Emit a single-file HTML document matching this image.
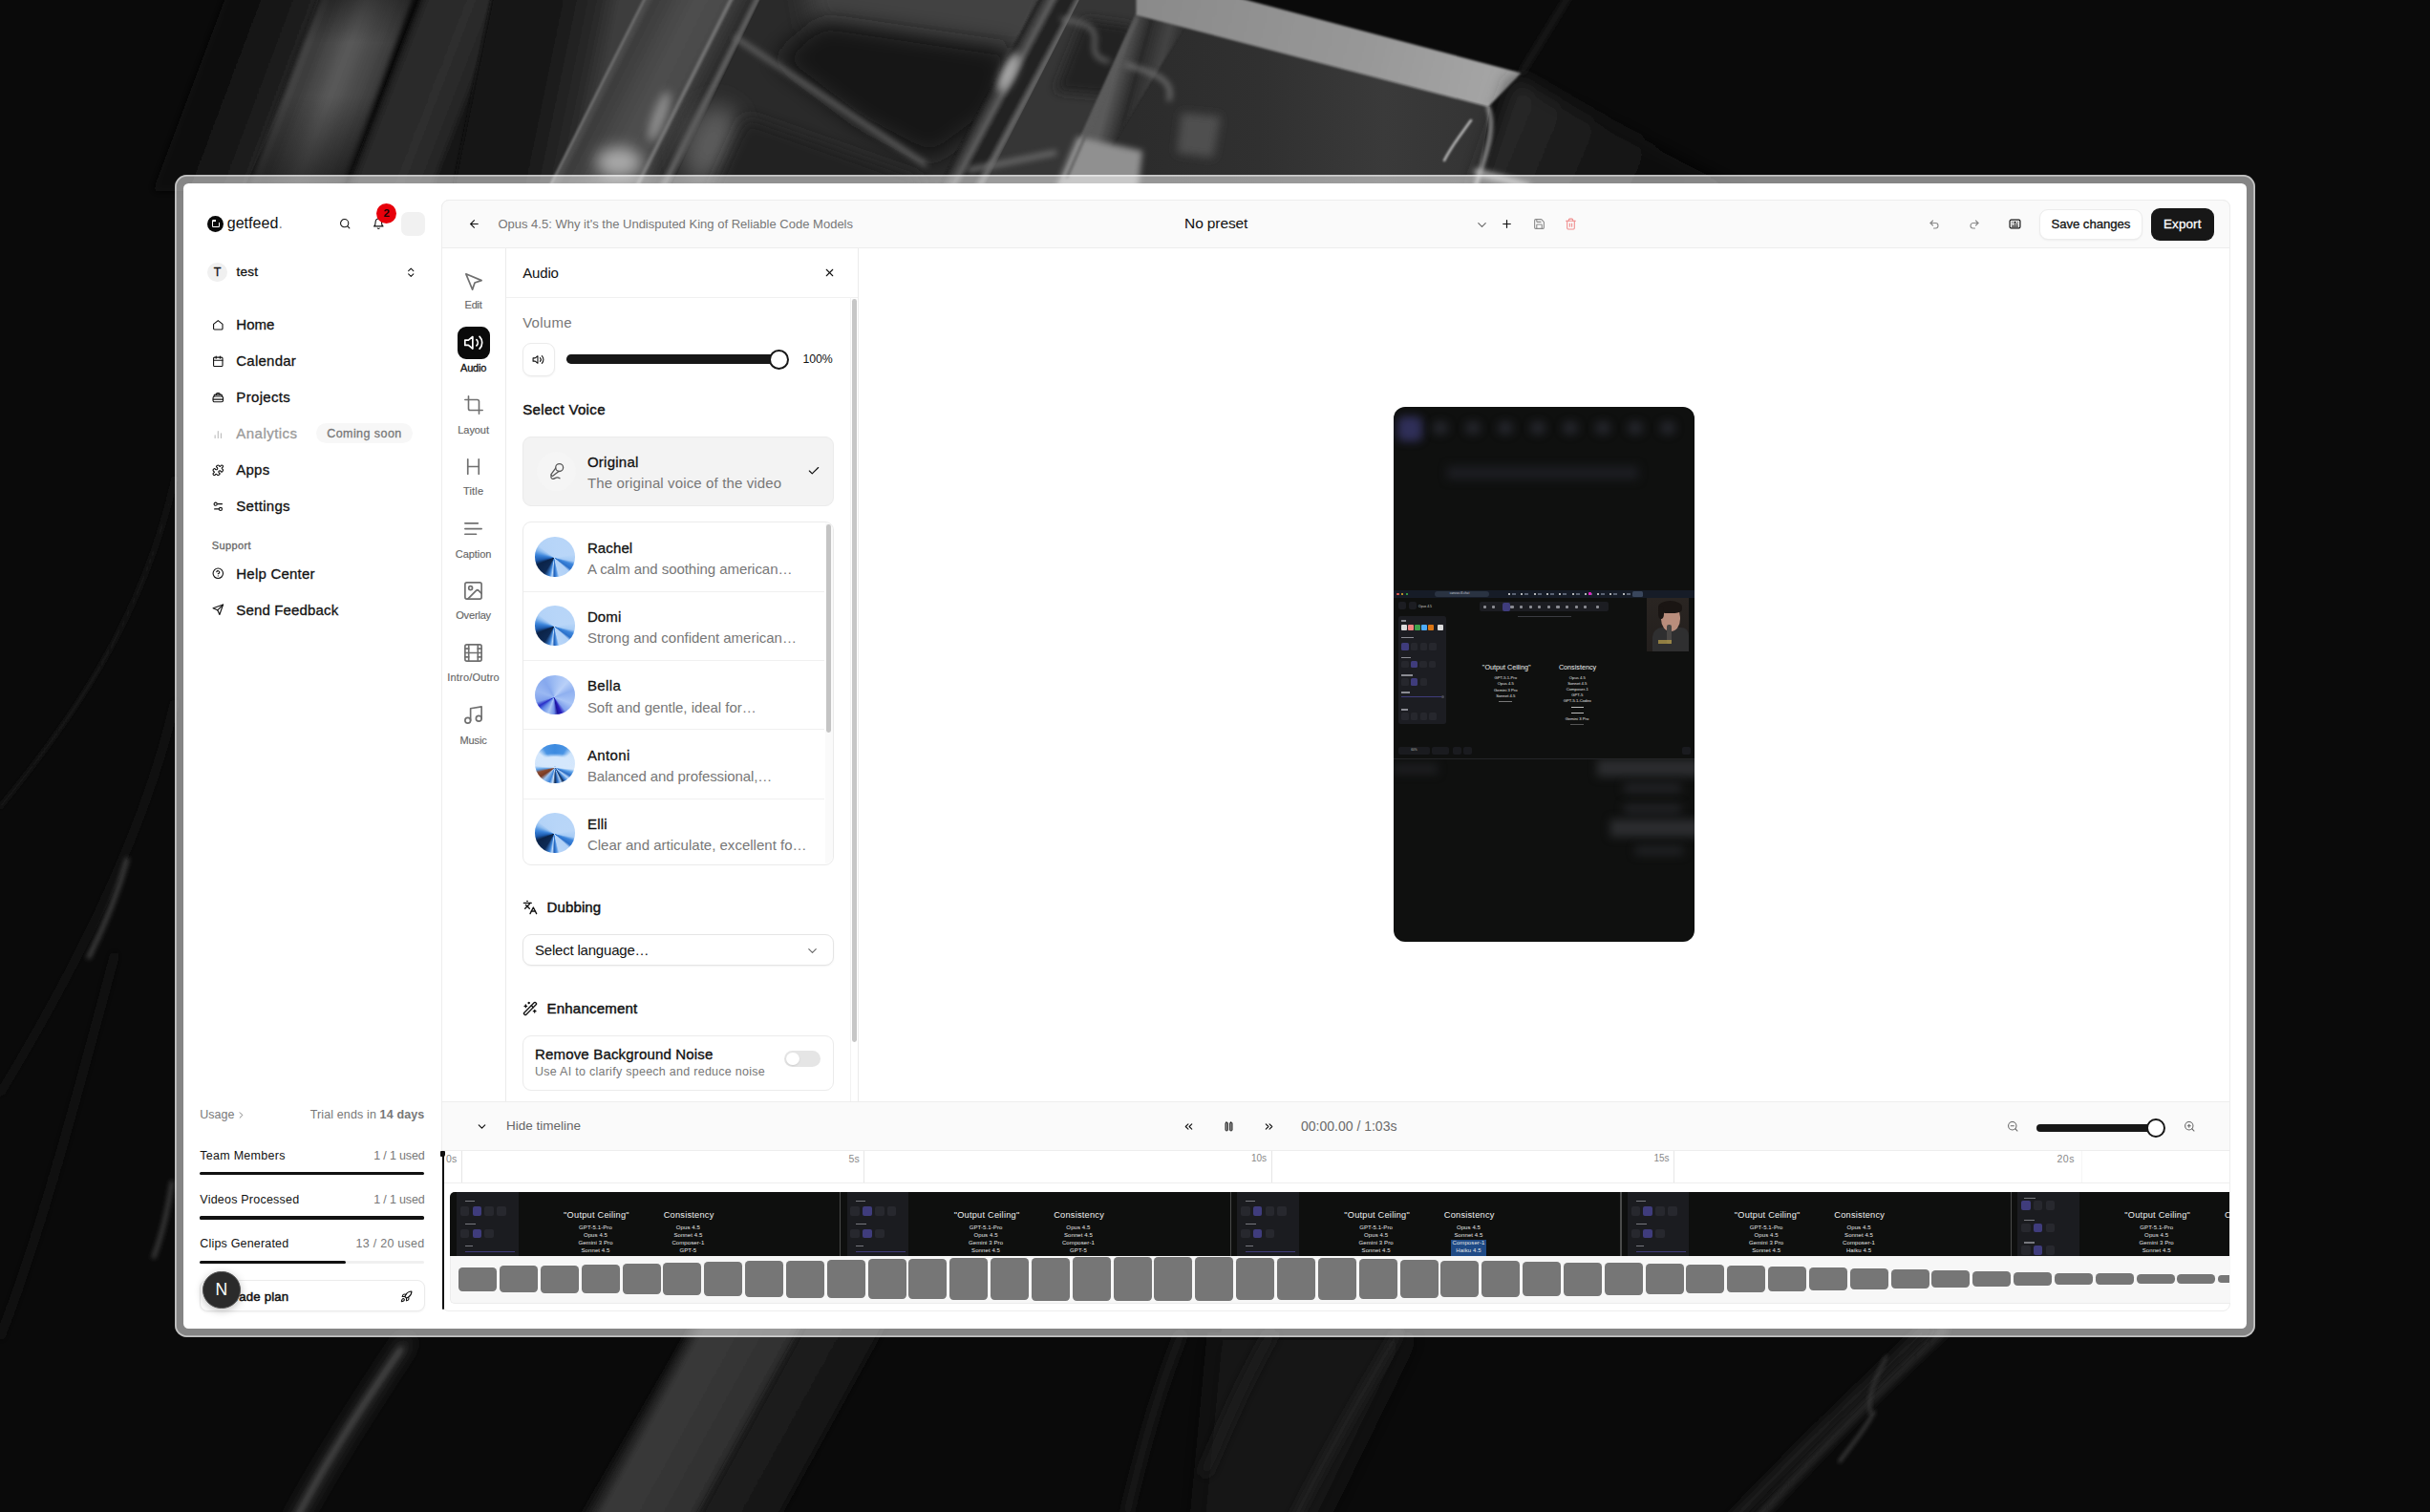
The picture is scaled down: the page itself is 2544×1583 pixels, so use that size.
<!DOCTYPE html>
<html lang="en"><head><meta charset="utf-8"><title>getfeed editor</title><style>
html,body{margin:0;padding:0;background:#0a0a0a;}
body{width:2544px;height:1583px;position:relative;overflow:hidden;background:#0a0a0a;font-family:"Liberation Sans", sans-serif;}
body>div,body>svg,body>span,.a{position:absolute;box-sizing:border-box;}
.t{white-space:nowrap;display:block;}
.t span{display:inline-block;}
svg{display:block;overflow:visible;}
</style></head>
<body>
<svg class="a" style="left:0;top:0" width="2544" height="1583" viewBox="0 0 2544 1583"><defs><linearGradient id="g1" gradientUnits="userSpaceOnUse" x1="235" y1="0" x2="324.0" y2="33.4"><stop offset="0" stop-color="#0a0a0a"/><stop offset="0.6" stop-color="#161616"/><stop offset="1" stop-color="#232323"/></linearGradient><linearGradient id="g2" gradientUnits="userSpaceOnUse" x1="334" y1="0" x2="421.4" y2="33.2"><stop offset="0" stop-color="#2e2e2e"/><stop offset="0.05" stop-color="#484848"/><stop offset="0.13" stop-color="#3a3a3a"/><stop offset="0.5" stop-color="#5a5a5a"/><stop offset="0.8" stop-color="#464646"/><stop offset="0.94" stop-color="#3c3c3c"/><stop offset="1" stop-color="#1e1e1e"/></linearGradient><linearGradient id="g3" gradientUnits="userSpaceOnUse" x1="0" y1="-10" x2="0" y2="45"><stop offset="0" stop-color="#0b0b0b" stop-opacity="0.5"/><stop offset="1" stop-color="#0b0b0b" stop-opacity="0"/></linearGradient><linearGradient id="g4" gradientUnits="userSpaceOnUse" x1="0" y1="100" x2="0" y2="200"><stop offset="0" stop-color="#0b0b0b" stop-opacity="0"/><stop offset="1" stop-color="#0b0b0b" stop-opacity="0.6"/></linearGradient><linearGradient id="g5" gradientUnits="userSpaceOnUse" x1="440" y1="0" x2="521.2" y2="31.7"><stop offset="0" stop-color="#1a1a1a"/><stop offset="0.1" stop-color="#2a2a2a"/><stop offset="0.6" stop-color="#2d2d2d"/><stop offset="0.9" stop-color="#262626"/><stop offset="1" stop-color="#151515"/></linearGradient><linearGradient id="g6" gradientUnits="userSpaceOnUse" x1="515" y1="0" x2="643.1" y2="26.3"><stop offset="0" stop-color="#151515"/><stop offset="0.5" stop-color="#161616"/><stop offset="0.85" stop-color="#2a2a2a"/><stop offset="1" stop-color="#3c3c3c"/></linearGradient><linearGradient id="g7" gradientUnits="userSpaceOnUse" x1="673" y1="0" x2="773.0" y2="50.5"><stop offset="0" stop-color="#8a8a8a"/><stop offset="0.025" stop-color="#505050"/><stop offset="0.1" stop-color="#3c3c3c"/><stop offset="0.45" stop-color="#4e4e4e"/><stop offset="0.71" stop-color="#4a4a4a"/><stop offset="0.735" stop-color="#808080"/><stop offset="0.76" stop-color="#3c3c3c"/><stop offset="0.9" stop-color="#2c2c2c"/><stop offset="0.955" stop-color="#626262"/><stop offset="1" stop-color="#303030"/></linearGradient><linearGradient id="g8" gradientUnits="userSpaceOnUse" x1="1087" y1="0" x2="1125.9" y2="20.8"><stop offset="0" stop-color="#1c1c1c"/><stop offset="0.3" stop-color="#5c5c5c"/><stop offset="0.45" stop-color="#222"/><stop offset="0.7" stop-color="#222"/><stop offset="0.85" stop-color="#686868"/><stop offset="1" stop-color="#2e2e2e"/></linearGradient><linearGradient id="g9" gradientUnits="userSpaceOnUse" x1="1189" y1="0" x2="1560" y2="0"><stop offset="0" stop-color="#2c2c2c"/><stop offset="0.35" stop-color="#303030"/><stop offset="0.7" stop-color="#3a3a3a"/><stop offset="1" stop-color="#333"/></linearGradient><linearGradient id="g10" gradientUnits="userSpaceOnUse" x1="1189" y1="0" x2="1240" y2="14"><stop offset="0" stop-color="#5a5a5a"/><stop offset="0.4" stop-color="#2a2a2a"/><stop offset="0.8" stop-color="#444"/><stop offset="1" stop-color="#333"/></linearGradient><linearGradient id="g11" gradientUnits="userSpaceOnUse" x1="1189" y1="0" x2="1592" y2="100"><stop offset="0" stop-color="#8a8a8a"/><stop offset="0.6" stop-color="#989898"/><stop offset="1" stop-color="#a8a8a8"/></linearGradient><linearGradient id="g12" gradientUnits="userSpaceOnUse" x1="1570" y1="110" x2="1760" y2="190"><stop offset="0" stop-color="#2a2a2a"/><stop offset="0.4" stop-color="#1c1c1c"/><stop offset="1" stop-color="#0b0b0b"/></linearGradient><linearGradient id="g13" gradientUnits="userSpaceOnUse" x1="728" y1="1380" x2="833" y2="1438"><stop offset="0" stop-color="#161616"/><stop offset="0.12" stop-color="#3a3a3a"/><stop offset="0.5" stop-color="#353535"/><stop offset="0.85" stop-color="#2e2e2e"/><stop offset="1" stop-color="#161616"/></linearGradient><linearGradient id="g14" gradientUnits="userSpaceOnUse" x1="846" y1="1380" x2="920" y2="1421"><stop offset="0" stop-color="#1c1c1c"/><stop offset="0.7" stop-color="#181818"/><stop offset="1" stop-color="#0d0d0d"/></linearGradient><filter id="b1" filterUnits="userSpaceOnUse" x="-100" y="-100" width="2800" height="1800"><feGaussianBlur stdDeviation="1"/></filter><filter id="b1.5" filterUnits="userSpaceOnUse" x="-100" y="-100" width="2800" height="1800"><feGaussianBlur stdDeviation="1.5"/></filter><filter id="b2" filterUnits="userSpaceOnUse" x="-100" y="-100" width="2800" height="1800"><feGaussianBlur stdDeviation="2"/></filter><filter id="b2.5" filterUnits="userSpaceOnUse" x="-100" y="-100" width="2800" height="1800"><feGaussianBlur stdDeviation="2.5"/></filter><filter id="b3" filterUnits="userSpaceOnUse" x="-100" y="-100" width="2800" height="1800"><feGaussianBlur stdDeviation="3"/></filter><filter id="b4" filterUnits="userSpaceOnUse" x="-100" y="-100" width="2800" height="1800"><feGaussianBlur stdDeviation="4"/></filter><filter id="b5" filterUnits="userSpaceOnUse" x="-100" y="-100" width="2800" height="1800"><feGaussianBlur stdDeviation="5"/></filter><filter id="b6" filterUnits="userSpaceOnUse" x="-100" y="-100" width="2800" height="1800"><feGaussianBlur stdDeviation="6"/></filter><filter id="b8" filterUnits="userSpaceOnUse" x="-100" y="-100" width="2800" height="1800"><feGaussianBlur stdDeviation="8"/></filter><filter id="b10" filterUnits="userSpaceOnUse" x="-100" y="-100" width="2800" height="1800"><feGaussianBlur stdDeviation="10"/></filter><filter id="b12" filterUnits="userSpaceOnUse" x="-100" y="-100" width="2800" height="1800"><feGaussianBlur stdDeviation="12"/></filter></defs><polygon points="246.25,-30 347.1,-30 262,200 160,200" fill="url(#g1)" filter="url(#b4)"/><polygon points="345.4,-30 442.8,-30 360,200 258,200" fill="url(#g2)" filter="url(#b2)"/><polygon points="345,-30 445,-30 420,45 316,45" fill="url(#g3)"/><polygon points="300,100 402,100 362,200 254,200" fill="url(#g4)"/><polygon points="451.7,-30 521.15,-30 474,200 362,200" fill="url(#g5)" filter="url(#b2)"/><polygon points="521.15,-30 690.4,-30 580,200 474,200" fill="url(#g6)" filter="url(#b2)"/><polygon points="688.15,-30 810.4,-30 700,200 572,200" fill="url(#g7)" filter="url(#b1)"/><ellipse cx="648" cy="170" rx="24" ry="16" fill="#a8a8a8" filter="url(#b8)"/><ellipse cx="690" cy="122" rx="7" ry="28" fill="#8c8c8c" filter="url(#b5)" transform="rotate(20 690 122)"/><polygon points="810.4,-30 1131.8,-30 1003,200 700,200" fill="#2a2a2a"/><polygon points="840,-30 1115,-30 1080,62 850,30" fill="#424242" filter="url(#b12)"/><polygon points="812,62 860,22 1062,52 1040,120 975,168 900,128" fill="#171717" filter="url(#b12)"/><ellipse cx="744" cy="150" rx="26" ry="42" fill="#5c5c5c" filter="url(#b12)" transform="rotate(20 744 150)"/><line x1="771" y1="40" x2="968" y2="172" stroke="#666" stroke-width="5" stroke-linecap="round" filter="url(#b3)"/><polygon points="780,122 965,187 960,210 740,210" fill="#222" filter="url(#b8)"/><polygon points="1103.05,-30 1153.05,-30 1030,200 980,200" fill="url(#g8)" filter="url(#b1)"/><ellipse cx="1056" cy="76" rx="7" ry="22" fill="#aaa" filter="url(#b4)" transform="rotate(25 1056 76)"/><polygon points="1145,-30 1192,-30 1192,200 1028,200" fill="#363636"/><polygon points="1135,20 1190,28 1160,100 1105,95" fill="#242424" filter="url(#b6)"/><path d="M1112 20 C1140 24 1148 30 1146 44 C1144 58 1150 62 1160 64" fill="none" stroke="#6c6c6c" stroke-width="4" stroke-linecap="round" filter="url(#b3)"/><line x1="1015" y1="178" x2="1104" y2="160" stroke="#707070" stroke-width="5" stroke-linecap="round" filter="url(#b3)"/><polygon points="1189,14 1560,112 1546,200 1120,200" fill="url(#g9)"/><polygon points="1189,14 1240,28 1135,200 1105,200" fill="url(#g10)" filter="url(#b1)"/><polygon points="1237,118 1278,122 1270,165 1232,160" fill="#505050" filter="url(#b5)"/><path d="M1180 68 C1205 76 1230 82 1224 104" fill="none" stroke="#7a7a7a" stroke-width="4" stroke-linecap="round" filter="url(#b3)"/><polygon points="1100,210 1128,143 1196,158 1190,210" fill="#909090" filter="url(#b3)"/><line x1="1190" y1="20" x2="1117" y2="186" stroke="#5c5c5c" stroke-width="2.5" stroke-linecap="round" filter="url(#b1.5)"/><polygon points="1189.5,-30 1192,-30 1305,0 1592.5,76.4 1558,112 1189.5,15.8" fill="url(#g11)" filter="url(#b1)"/><polygon points="1189.5,-30 1305,0 1189.5,0" fill="#8a8a8a"/><polygon points="1585,80 1830,205 1540,205" fill="url(#g12)" filter="url(#b10)"/><path d="M1546 180 C1560 184 1580 188 1600 196" fill="none" stroke="#b8b8b8" stroke-width="6" stroke-linecap="round" filter="url(#b3)"/><path d="M1558 112 C1566 135 1556 160 1545 195" fill="none" stroke="#c4c4c4" stroke-width="3" stroke-linecap="round" filter="url(#b2)"/><path d="M1540 126 C1530 140 1520 152 1512 168" fill="none" stroke="#bdbdbd" stroke-width="2.5" stroke-linecap="round" filter="url(#b1)"/><line x1="1652" y1="-20" x2="1593" y2="76" stroke="#2a2a2a" stroke-width="3" stroke-linecap="round" filter="url(#b3)"/><path d="M183 500 C150 650 70 760 0 845" fill="none" stroke="#1d1d1d" stroke-width="3" stroke-linecap="round" filter="url(#b2)"/><path d="M183 735 C150 880 70 1030 0 1145" fill="none" stroke="#1b1b1b" stroke-width="4" stroke-linecap="round" filter="url(#b3)"/><path d="M133 900 C122 940 108 972 93 1002" fill="none" stroke="#4a4a4a" stroke-width="4" stroke-linecap="round" filter="url(#b2.5)"/><path d="M180 1238 C176 1265 170 1292 161 1316" fill="none" stroke="#424242" stroke-width="4" stroke-linecap="round" filter="url(#b2.5)"/><path d="M120 1000 C80 1150 40 1300 0 1400" fill="none" stroke="#181818" stroke-width="5" stroke-linecap="round" filter="url(#b4)"/><polygon points="728,1380 846,1380 708,1630 584,1630" fill="url(#g13)" filter="url(#b3)"/><polygon points="846,1380 930,1380 792,1630 708,1630" fill="url(#g14)" filter="url(#b4)"/><path d="M424 1406 C385 1466 342 1530 300 1610" fill="none" stroke="#2a2a2a" stroke-width="14" stroke-linecap="round" filter="url(#b8)"/><path d="M420 1412 C380 1470 340 1530 305 1600" fill="none" stroke="#5a5a5a" stroke-width="4" stroke-linecap="round" filter="url(#b3)"/><path d="M2035 1392 C1965 1456 1900 1522 1830 1600" fill="none" stroke="#2e2e2e" stroke-width="8" stroke-linecap="round" filter="url(#b4)"/><path d="M2016 1392 C1950 1455 1880 1522 1806 1600" fill="none" stroke="#1e1e1e" stroke-width="12" stroke-linecap="round" filter="url(#b5)"/><path d="M1962 1478 C1952 1498 1937 1514 1926 1530" fill="none" stroke="#505050" stroke-width="2.5" stroke-linecap="round" filter="url(#b2)"/><path d="M1975 1420 C1960 1450 1955 1462 1958 1480" fill="none" stroke="#3c3c3c" stroke-width="2.5" stroke-linecap="round" filter="url(#b2)"/><polygon points="1272,1395 1480,1395 1365,1630 1250,1630" fill="#141414" filter="url(#b12)"/><path d="M1462 1398 C1420 1470 1390 1520 1345 1610" fill="none" stroke="#242424" stroke-width="8" stroke-linecap="round" filter="url(#b5)"/><path d="M1330 1398 C1300 1450 1280 1500 1262 1540" fill="none" stroke="#1c1c1c" stroke-width="10" stroke-linecap="round" filter="url(#b6)"/><path d="M1236 1398 C1215 1450 1200 1500 1180 1583" fill="none" stroke="#1a1a1a" stroke-width="8" stroke-linecap="round" filter="url(#b5)"/></svg>
<div style="left:183.2px;top:183px;width:2177.6px;height:1216.8px;border-radius:12.5px;background:rgba(255,255,255,0.5);box-shadow:inset 0 0 0 1.8px rgba(255,255,255,0.5);"></div>
<div style="left:191.8px;top:191.8px;width:2160.3px;height:1199px;border-radius:5.5px;background:#fff;"></div>
<div style="left:217px;top:225.8px;width:17px;height:17px;border-radius:50%;background:#0a0a0a;"></div>
<div style="left:221.6px;top:230.3px;width:8.4px;height:8px;background:#fff;border-radius:1.2px;"></div>
<div style="left:223px;top:231.6px;width:5.6px;height:5.4px;background:#0a0a0a;border-radius:0.6px;"></div>
<div style="left:226px;top:229.8px;width:4.4px;height:3.5px;background:#0a0a0a;"></div>
<span class="t" style="top:223.28px;font-size:16px;line-height:21px;color:#111;letter-spacing:0.06px;left:237.7px;">getfeed<span style="color:#8a8a8a">.</span></span>
<svg style="left:354.5px;top:228.2px;" width="12.4" height="12.4" viewBox="0 0 24 24" fill="none" stroke="#111" stroke-width="2.1" stroke-linecap="round" stroke-linejoin="round"><circle cx="11" cy="11" r="8"/><path d="m21 21-4.3-4.3"/></svg>
<svg style="left:390.2px;top:228.3px;" width="12.6" height="12.6" viewBox="0 0 24 24" fill="none" stroke="#111" stroke-width="2.1" stroke-linecap="round" stroke-linejoin="round"><path d="M6 8a6 6 0 0 1 12 0c0 7 3 9 3 9H3s3-2 3-9"/><path d="M10.3 21a1.94 1.94 0 0 0 3.4 0"/></svg>
<div style="left:393.95px;top:212.55px;width:21.5px;height:21.5px;border-radius:50%;background:#e7000b;"></div>
<span class="t" style="top:215.93px;font-size:11.5px;line-height:15px;color:#1a0306;font-weight:700;left:104.7px;width:600px;text-align:center;"><span>2</span></span>
<div style="left:420px;top:222px;width:25px;height:25px;background:#f1f1f1;border-radius:7px;"></div>
<div style="left:217.2px;top:274.5px;width:20.6px;height:20.6px;border-radius:50%;background:#f0f0f0;"></div>
<span class="t" style="top:276.94px;font-size:12.5px;line-height:16px;color:#111;-webkit-text-stroke:0.3px #111;left:-72.5px;width:600px;text-align:center;"><span>T</span></span>
<span class="t" style="top:275.76px;font-size:13.5px;line-height:18px;color:#111;-webkit-text-stroke:0.3px #111;letter-spacing:0.23px;left:247.6px;">test</span>
<svg style="left:424.05px;top:278.75px;" width="12.5" height="12.5" viewBox="0 0 24 24" fill="none" stroke="#111" stroke-width="2" stroke-linecap="round" stroke-linejoin="round"><path d="m7 15 5 5 5-5"/><path d="m7 9 5-5 5 5"/></svg>
<svg style="left:221.5px;top:333.7px;" width="12.6" height="12.6" viewBox="0 0 24 24" fill="none" stroke="#111" stroke-width="2.1" stroke-linecap="round" stroke-linejoin="round"><path d="M3 10.2 12 3l9 7.2V19a2 2 0 0 1-2 2H5a2 2 0 0 1-2-2z"/></svg>
<span class="t" style="top:329.97px;font-size:15px;line-height:20px;color:#111;-webkit-text-stroke:0.3px #111;left:247.3px;">Home</span>
<svg style="left:221.5px;top:371.7px;" width="12.6" height="12.6" viewBox="0 0 24 24" fill="none" stroke="#111" stroke-width="2.1" stroke-linecap="round" stroke-linejoin="round"><rect x="3" y="4" width="18" height="18" rx="2"/><path d="M16 2v4M8 2v4M3 10h18"/></svg>
<span class="t" style="top:367.97px;font-size:15px;line-height:20px;color:#111;-webkit-text-stroke:0.3px #111;letter-spacing:0.23px;left:247.3px;">Calendar</span>
<svg style="left:221.5px;top:409.7px;" width="12.6" height="12.6" viewBox="0 0 24 24" fill="none" stroke="#111" stroke-width="2.1" stroke-linecap="round" stroke-linejoin="round"><path d="M4 9.5V8a2 2 0 0 1 2-2h12a2 2 0 0 1 2 2v1.5"/><rect x="2" y="9.5" width="20" height="11" rx="3"/><path d="M8.5 6V5a2 2 0 0 1 2-2h3a2 2 0 0 1 2 2v1"/><path d="M2.5 15.5h19"/></svg>
<span class="t" style="top:405.97px;font-size:15px;line-height:20px;color:#111;-webkit-text-stroke:0.3px #111;letter-spacing:0.34px;left:247.3px;">Projects</span>
<svg style="left:221.5px;top:447.6px;" width="12.6" height="12.6" viewBox="0 0 24 24" fill="none" stroke="#bcbcbc" stroke-width="2.1" stroke-linecap="round" stroke-linejoin="round"><path d="M6 20v-5M12 20V7M18 20v-9"/></svg>
<span class="t" style="top:443.87px;font-size:15px;line-height:20px;color:#9a9a9a;-webkit-text-stroke:0.3px #9a9a9a;letter-spacing:0.47px;left:247.3px;">Analytics</span>
<div style="left:331px;top:443.3px;width:100.6px;height:21.2px;background:#f7f7f7;border-radius:10.6px;"></div>
<span class="t" style="top:445.84px;font-size:12.5px;line-height:16px;color:#777;-webkit-text-stroke:0.3px #777;letter-spacing:0.44px;left:342.2px;">Coming soon</span>
<svg style="left:221.5px;top:485.7px;" width="12.6" height="12.6" viewBox="0 0 24 24" fill="none" stroke="#111" stroke-width="2.1" stroke-linecap="round" stroke-linejoin="round"><path d="M19.439 7.85c-.049.322.059.648.289.878l1.568 1.568c.47.47.706 1.087.706 1.704s-.235 1.233-.706 1.704l-1.611 1.611a.98.98 0 0 1-.837.276c-.47-.07-.802-.48-.968-.925a2.501 2.501 0 1 0-3.214 3.214c.446.166.855.497.925.968a.979.979 0 0 1-.276.837l-1.61 1.61a2.404 2.404 0 0 1-1.705.707 2.402 2.402 0 0 1-1.704-.706l-1.568-1.568a1.026 1.026 0 0 0-.877-.29c-.493.074-.84.504-1.02.968a2.5 2.5 0 1 1-3.237-3.237c.464-.18.894-.527.967-1.02a1.026 1.026 0 0 0-.289-.877l-1.568-1.568A2.402 2.402 0 0 1 1.998 12c0-.617.236-1.234.706-1.704L4.23 8.77c.24-.24.581-.353.917-.303.515.077.877.528 1.073 1.01a2.5 2.5 0 1 0 3.259-3.259c-.482-.196-.933-.558-1.01-1.073-.05-.336.062-.676.303-.917l1.525-1.525A2.402 2.402 0 0 1 12 1.998c.617 0 1.234.236 1.704.706l1.568 1.568c.23.23.556.338.877.29.493-.074.84-.504 1.02-.968a2.5 2.5 0 1 1 3.237 3.237c-.464.18-.894.527-.967 1.02Z"/></svg>
<span class="t" style="top:481.97px;font-size:15px;line-height:20px;color:#111;-webkit-text-stroke:0.3px #111;letter-spacing:0.22px;left:247.3px;">Apps</span>
<svg style="left:221.5px;top:523.7px;" width="12.6" height="12.6" viewBox="0 0 24 24" fill="none" stroke="#111" stroke-width="2.1" stroke-linecap="round" stroke-linejoin="round"><path d="M20 7h-9"/><path d="M14 17H5"/><circle cx="17" cy="17" r="3"/><circle cx="7" cy="7" r="3"/></svg>
<span class="t" style="top:519.97px;font-size:15px;line-height:20px;color:#111;-webkit-text-stroke:0.3px #111;letter-spacing:0.3px;left:247.3px;">Settings</span>
<span class="t" style="top:564.33px;font-size:11px;line-height:14px;color:#666;-webkit-text-stroke:0.3px #666;letter-spacing:0.4px;left:221.7px;">Support</span>
<svg style="left:221.5px;top:594.4px;" width="12.6" height="12.6" viewBox="0 0 24 24" fill="none" stroke="#111" stroke-width="2.1" stroke-linecap="round" stroke-linejoin="round"><circle cx="12" cy="12" r="10"/><path d="M9.09 9a3 3 0 0 1 5.83 1c0 2-3 3-3 3"/><path d="M12 17h.01"/></svg>
<span class="t" style="top:590.67px;font-size:15px;line-height:20px;color:#111;-webkit-text-stroke:0.3px #111;letter-spacing:0.22px;left:247.3px;">Help Center</span>
<svg style="left:221.5px;top:632.4px;" width="12.6" height="12.6" viewBox="0 0 24 24" fill="none" stroke="#111" stroke-width="2.1" stroke-linecap="round" stroke-linejoin="round"><path d="m22 2-7 20-4-9-9-4Z"/><path d="M22 2 11 13"/></svg>
<span class="t" style="top:628.67px;font-size:15px;line-height:20px;color:#111;-webkit-text-stroke:0.3px #111;letter-spacing:0.15px;left:247.3px;">Send Feedback</span>
<span class="t" style="top:1159.44px;font-size:12.5px;line-height:16px;color:#777;letter-spacing:-0.01px;left:209.3px;">Usage</span>
<svg style="left:247px;top:1162.3px;" width="11" height="11" viewBox="0 0 24 24" fill="none" stroke="#777" stroke-width="2" stroke-linecap="round" stroke-linejoin="round"><path d="m9 18 6-6-6-6"/></svg>
<span class="t" style="top:1159.44px;font-size:12.5px;line-height:16px;color:#777;letter-spacing:0.13px;left:324.7px;">Trial ends in <b>14 days</b></span>
<span class="t" style="top:1201.54px;font-size:12.5px;line-height:16px;color:#111;letter-spacing:0.27px;left:209.3px;">Team Members</span>
<span class="t" style="top:1201.54px;font-size:12.5px;line-height:16px;color:#777;letter-spacing:-0.16px;left:391.2px;">1 / 1 used</span>
<div style="left:209.3px;top:1227px;width:235.2px;height:3.2px;background:#f0f0f0;border-radius:1.6px;"></div>
<div style="left:209.3px;top:1227px;width:235.2px;height:3.2px;background:#111;border-radius:1.6px;"></div>
<span class="t" style="top:1247.74px;font-size:12.5px;line-height:16px;color:#111;letter-spacing:0.22px;left:209.3px;">Videos Processed</span>
<span class="t" style="top:1247.74px;font-size:12.5px;line-height:16px;color:#777;letter-spacing:-0.16px;left:391.2px;">1 / 1 used</span>
<div style="left:209.3px;top:1273.4px;width:235.2px;height:3.2px;background:#f0f0f0;border-radius:1.6px;"></div>
<div style="left:209.3px;top:1273.4px;width:235.2px;height:3.2px;background:#111;border-radius:1.6px;"></div>
<span class="t" style="top:1294.44px;font-size:12.5px;line-height:16px;color:#111;letter-spacing:0.18px;left:209.3px;">Clips Generated</span>
<span class="t" style="top:1294.44px;font-size:12.5px;line-height:16px;color:#777;letter-spacing:0.26px;left:372.6px;">13 / 20 used</span>
<div style="left:209.3px;top:1319.8px;width:235.2px;height:3.2px;background:#f0f0f0;border-radius:1.6px;"></div>
<div style="left:209.3px;top:1319.8px;width:152.88px;height:3.2px;background:#111;border-radius:1.6px;"></div>
<div style="left:209px;top:1340.3px;width:235.5px;height:32.7px;border:1px solid #ebebeb;border-radius:8px;background:#fff;box-shadow:0 1px 2px rgba(0,0,0,0.05);"></div>
<span class="t" style="top:1348.85px;font-size:13.2px;line-height:17px;color:#111;-webkit-text-stroke:0.5px #111;letter-spacing:0.18px;left:221px;">Upgrade plan</span>
<svg style="left:418.8px;top:1350.5px;" width="13" height="13" viewBox="0 0 24 24" fill="none" stroke="#111" stroke-width="2" stroke-linecap="round" stroke-linejoin="round"><path d="M4.5 16.5c-1.5 1.26-2 5-2 5s3.74-.5 5-2c.71-.84.7-2.13-.09-2.91a2.18 2.18 0 0 0-2.91-.09z"/><path d="m12 15-3-3a22 22 0 0 1 2-3.950A12.880 12.880 0 0 1 22 2c0 2.720-.780 7.500-6 11a22.350 22.350 0 0 1-4 2z"/><path d="M9 12H4s.55-3.030 2-4c1.620-1.080 5 0 5 0"/><path d="M12 15v5s3.030-.55 4-2c1.080-1.620 0-5 0-5"/></svg>
<div style="left:212.05px;top:1330.95px;width:39.5px;height:39.5px;border-radius:50%;background:#2b2b2b;border:1px solid #505050;box-shadow:0 2px 8px rgba(0,0,0,0.25);"></div>
<span class="t" style="top:1339.3px;font-size:17.6px;line-height:23px;color:#fff;left:-68.2px;width:600px;text-align:center;"><span>N</span></span>
<div style="left:462.2px;top:209.2px;width:1872.5px;height:1164.3px;border:1px solid #ededed;border-radius:8px;background:#fff;"></div>
<div style="left:462.2px;top:209.2px;width:1872.5px;height:50.8px;border:1px solid #ededed;border-radius:8px 8px 0 0;background:#fafafa;"></div>
<svg style="left:489.8px;top:227.7px;" width="13" height="13" viewBox="0 0 24 24" fill="none" stroke="#111" stroke-width="2" stroke-linecap="round" stroke-linejoin="round"><path d="m12 19-7-7 7-7"/><path d="M19 12H5"/></svg>
<span class="t" style="top:225.95px;font-size:13px;line-height:17px;color:#777;letter-spacing:0.01px;left:521.4px;">Opus 4.5: Why it's the Undisputed King of Reliable Code Models</span>
<span class="t" style="top:224.48px;font-size:15.5px;line-height:20px;color:#111;letter-spacing:-0.12px;left:1240.1px;">No preset</span>
<svg style="left:1543.6px;top:227.5px;" width="15" height="15" viewBox="0 0 24 24" fill="none" stroke="#666" stroke-width="1.8" stroke-linecap="round" stroke-linejoin="round"><path d="m6 9 6 6 6-6"/></svg>
<svg style="left:1570.7px;top:228px;" width="13" height="13" viewBox="0 0 24 24" fill="none" stroke="#111" stroke-width="2.2" stroke-linecap="round" stroke-linejoin="round"><path d="M5 12h14"/><path d="M12 5v14"/></svg>
<svg style="left:1604.5px;top:228px;" width="13" height="13" viewBox="0 0 24 24" fill="none" stroke="#8a8a8a" stroke-width="2" stroke-linecap="round" stroke-linejoin="round"><path d="M15.200 3a2 2 0 0 1 1.400.6l3.800 3.800a2 2 0 0 1 .6 1.400V19a2 2 0 0 1-2 2H5a2 2 0 0 1-2-2V5a2 2 0 0 1 2-2z"/><path d="M17 21v-7a1 1 0 0 0-1-1H8a1 1 0 0 0-1 1v7"/><path d="M7 3v4a1 1 0 0 0 1 1h7"/></svg>
<svg style="left:1637.9px;top:228px;" width="13" height="13" viewBox="0 0 24 24" fill="none" stroke="#f08c8c" stroke-width="2" stroke-linecap="round" stroke-linejoin="round"><path d="M3 6h18"/><path d="M19 6v14c0 1-1 2-2 2H7c-1 0-2-1-2-2V6"/><path d="M8 6V4c0-1 1-2 2-2h4c1 0 2 1 2 2v2"/><path d="M10 11v6"/><path d="M14 11v6"/></svg>
<svg style="left:2018.8px;top:228.8px;" width="12" height="12" viewBox="0 0 24 24" fill="none" stroke="#8a8a8a" stroke-width="2.2" stroke-linecap="round" stroke-linejoin="round"><path d="M9 14 4 9l5-5"/><path d="M4 9h10.500a5.500 5.500 0 0 1 5.500 5.500a5.500 5.500 0 0 1-5.500 5.500H11"/></svg>
<svg style="left:2060.5px;top:228.8px;" width="12" height="12" viewBox="0 0 24 24" fill="none" stroke="#8a8a8a" stroke-width="2.2" stroke-linecap="round" stroke-linejoin="round"><path d="m15 14 5-5-5-5"/><path d="M20 9H9.500A5.500 5.500 0 0 0 4 14.500A5.500 5.500 0 0 0 9.500 20H13"/></svg>
<svg style="left:2102.5px;top:228px;" width="13" height="13" viewBox="0 0 24 24" fill="none" stroke="#111" stroke-width="2.2" stroke-linecap="round" stroke-linejoin="round"><rect width="20" height="16" x="2" y="4" rx="2.500"/><path d="M6.500 8.500h.01M10 8.500h4M17.500 8.500h.01M6.500 12.500h.01M10 12.500h7.500M6.500 16.500h11"/></svg>
<div style="left:2134.7px;top:218.6px;width:108.6px;height:32.6px;background:#fff;border:1px solid #ececec;border-radius:9px;box-shadow:0 1px 2px rgba(0,0,0,0.05);"></div>
<span class="t" style="top:226.45px;font-size:13.2px;line-height:17px;color:#111;-webkit-text-stroke:0.3px #111;letter-spacing:-0.07px;left:2147.5px;">Save changes</span>
<div style="left:2252px;top:218px;width:65.8px;height:33.6px;background:#171717;border-radius:9px;"></div>
<span class="t" style="top:226.45px;font-size:13.4px;line-height:17px;color:#fff;-webkit-text-stroke:0.3px #fff;letter-spacing:0.13px;left:2265px;">Export</span>
<div style="left:529px;top:259.5px;width:1px;height:894px;background:#ebebeb;"></div>
<svg style="left:484.1px;top:282.5px;" width="23" height="23" viewBox="0 0 24 24" fill="none" stroke="#707070" stroke-width="1.75" stroke-linecap="round" stroke-linejoin="round"><path d="m4 4 7.070 17 2.510-7.390L21 11.070z"/></svg>
<span class="t" style="top:311.93px;font-size:11px;line-height:14px;color:#666;-webkit-text-stroke:0.15px #666;letter-spacing:-0.19px;left:195.6px;width:600px;text-align:center;"><span>Edit</span></span>
<div style="left:478.8px;top:341.9px;width:34.2px;height:34px;background:#0a0a0a;border-radius:9px;"></div>
<svg style="left:485.25px;top:348.25px;" width="21.5" height="21.5" viewBox="0 0 24 24" fill="none" stroke="#fff" stroke-width="1.9" stroke-linecap="round" stroke-linejoin="round"><polygon points="11 5 6 9 2 9 2 15 6 15 11 19 11 5"/><path d="M15.540 8.460a5 5 0 0 1 0 7.070"/><path d="M19.070 4.930a10 10 0 0 1 0 14.140"/></svg>
<span class="t" style="top:378.13px;font-size:11px;line-height:14px;color:#111;-webkit-text-stroke:0.3px #111;letter-spacing:-0.23px;left:195.6px;width:600px;text-align:center;"><span>Audio</span></span>
<svg style="left:484.6px;top:413px;" width="22" height="22" viewBox="0 0 24 24" fill="none" stroke="#707070" stroke-width="1.75" stroke-linecap="round" stroke-linejoin="round"><path d="M6 2v14a2 2 0 0 0 2 2h14"/><path d="M18 22V8a2 2 0 0 0-2-2H2"/></svg>
<span class="t" style="top:442.93px;font-size:11px;line-height:14px;color:#666;-webkit-text-stroke:0.15px #666;letter-spacing:-0.07px;left:195.6px;width:600px;text-align:center;"><span>Layout</span></span>
<svg style="left:484.1px;top:476.9px;" width="23" height="23" viewBox="0 0 24 24" fill="none" stroke="#707070" stroke-width="1.75" stroke-linecap="round" stroke-linejoin="round"><path d="M6 12h12"/><path d="M6 20V4"/><path d="M18 20V4"/></svg>
<span class="t" style="top:507.13px;font-size:11px;line-height:14px;color:#666;-webkit-text-stroke:0.15px #666;letter-spacing:0.16px;left:195.6px;width:600px;text-align:center;"><span>Title</span></span>
<svg style="left:484.1px;top:541.7px;" width="23" height="23" viewBox="0 0 24 24" fill="none" stroke="#707070" stroke-width="1.75" stroke-linecap="round" stroke-linejoin="round"><path d="M17 6.100H3"/><path d="M21 12.100H3"/><path d="M15.100 18H3"/></svg>
<span class="t" style="top:572.83px;font-size:11px;line-height:14px;color:#666;-webkit-text-stroke:0.15px #666;letter-spacing:-0.03px;left:195.6px;width:600px;text-align:center;"><span>Caption</span></span>
<svg style="left:484.1px;top:606.7px;" width="23" height="23" viewBox="0 0 24 24" fill="none" stroke="#707070" stroke-width="1.75" stroke-linecap="round" stroke-linejoin="round"><rect width="18" height="18" x="3" y="3" rx="2" ry="2"/><circle cx="9" cy="9" r="2"/><path d="m21 15-3.086-3.086a2 2 0 0 0-2.828 0L6 21"/></svg>
<span class="t" style="top:637.43px;font-size:11px;line-height:14px;color:#666;-webkit-text-stroke:0.15px #666;letter-spacing:-0.17px;left:195.6px;width:600px;text-align:center;"><span>Overlay</span></span>
<svg style="left:484.1px;top:671.7px;" width="23" height="23" viewBox="0 0 24 24" fill="none" stroke="#707070" stroke-width="1.75" stroke-linecap="round" stroke-linejoin="round"><rect width="18" height="18" x="3" y="3" rx="2"/><path d="M7 3v18"/><path d="M3 7.500h4"/><path d="M3 12h18"/><path d="M3 16.500h4"/><path d="M17 3v18"/><path d="M17 7.500h4"/><path d="M17 16.500h4"/></svg>
<span class="t" style="top:702.33px;font-size:11px;line-height:14px;color:#666;-webkit-text-stroke:0.15px #666;letter-spacing:0.17px;left:195.6px;width:600px;text-align:center;"><span>Intro/Outro</span></span>
<svg style="left:484.1px;top:736.7px;" width="23" height="23" viewBox="0 0 24 24" fill="none" stroke="#707070" stroke-width="1.75" stroke-linecap="round" stroke-linejoin="round"><path d="M9 18V5l12-2v13"/><circle cx="6" cy="18" r="3"/><circle cx="18" cy="16" r="3"/></svg>
<span class="t" style="top:767.73px;font-size:11px;line-height:14px;color:#666;-webkit-text-stroke:0.15px #666;letter-spacing:-0.07px;left:195.6px;width:600px;text-align:center;"><span>Music</span></span>
<div style="left:897.5px;top:259.5px;width:1px;height:894px;background:#ebebeb;"></div>
<span class="t" style="top:275.57px;font-size:15px;line-height:20px;color:#111;letter-spacing:-0.15px;left:547.2px;">Audio</span>
<svg style="left:862px;top:279.1px;" width="13" height="13" viewBox="0 0 24 24" fill="none" stroke="#111" stroke-width="2" stroke-linecap="round" stroke-linejoin="round"><path d="M18 6 6 18"/><path d="m6 6 12 12"/></svg>
<div style="left:530px;top:310.6px;width:367.5px;height:1px;background:#f0f0f0;"></div>
<div style="left:889.5px;top:311px;width:1px;height:842px;background:#f2f2f2;"></div>
<div style="left:892px;top:313.2px;width:4.8px;height:777.5px;background:#c6c6c6;border-radius:2.4px;"></div>
<span class="t" style="top:328.07px;font-size:15px;line-height:20px;color:#777;letter-spacing:0.26px;left:547.2px;">Volume</span>
<div style="left:547px;top:359.3px;width:33.6px;height:34.3px;border:1px solid #ebebeb;border-radius:9px;background:#fff;box-shadow:0 1px 2px rgba(0,0,0,0.05);"></div>
<svg style="left:557.3px;top:369.8px;" width="13" height="13" viewBox="0 0 24 24" fill="none" stroke="#111" stroke-width="2" stroke-linecap="round" stroke-linejoin="round"><polygon points="11 5 6 9 2 9 2 15 6 15 11 19 11 5"/><path d="M15.540 8.460a5 5 0 0 1 0 7.070"/><path d="M19.070 4.930a10 10 0 0 1 0 14.140"/></svg>
<div style="left:593px;top:371.3px;width:231px;height:9.5px;background:#171717;border-radius:4.75px;"></div>
<div style="left:805px;top:365.5px;width:21px;height:21px;border-radius:50%;background:#fff;border:2px solid #171717;"></div>
<span class="t" style="top:368.14px;font-size:12.3px;line-height:16px;color:#111;letter-spacing:-0.11px;left:840.6px;">100%</span>
<span class="t" style="top:419.17px;font-size:15px;line-height:20px;color:#111;-webkit-text-stroke:0.45px #111;letter-spacing:0.34px;left:547.2px;">Select Voice</span>
<div style="left:547.2px;top:456.9px;width:325.8px;height:72.7px;background:#f3f3f3;border:1px solid #ebebeb;border-radius:9px;"></div>
<div style="left:561.5px;top:472.7px;width:41px;height:41px;border-radius:50%;background:#f5f5f5;"></div>
<svg style="left:572.5px;top:483.7px;" width="19" height="19" viewBox="0 0 24 24" fill="none" stroke="#555" stroke-width="1.6" stroke-linecap="round" stroke-linejoin="round"><path d="m11 7.601-5.994 8.190a1 1 0 0 0 .1 1.298l.817.818a1 1 0 0 0 1.314.087L15.090 12"/><path d="M16.500 21.174C15.500 20.500 14.372 20 13 20c-2.058 0-3.928 2.356-6 2-2.072-.356-2.775-3.369-1.500-4.500"/><circle cx="16" cy="7" r="5"/></svg>
<span class="t" style="top:474.17px;font-size:15px;line-height:20px;color:#111;-webkit-text-stroke:0.3px #111;letter-spacing:0.25px;left:614.9px;">Original</span>
<span class="t" style="top:495.97px;font-size:15px;line-height:20px;color:#777;letter-spacing:0.13px;left:614.9px;">The original voice of the video</span>
<svg style="left:844.6px;top:485.7px;" width="14" height="14" viewBox="0 0 24 24" fill="none" stroke="#111" stroke-width="2" stroke-linecap="round" stroke-linejoin="round"><path d="M20 6 9 17l-5-5"/></svg>
<div style="left:547.2px;top:546.1px;width:325.8px;height:359.6px;border:1px solid #ebebeb;border-radius:9px;background:#fff;"></div>
<div style="left:863.5px;top:547.1px;width:8.5px;height:357px;background:#fafafa;border-radius:0 8px 8px 0;"></div>
<div style="left:865px;top:549px;width:4.8px;height:217.7px;background:#c4c4c4;border-radius:2.4px;"></div>
<div style="left:560.3px;top:562px;width:41.6px;height:41.6px;border-radius:50%;background:conic-gradient(from 0deg at 48% 52%, #b7d5f8 0deg, #b9d6f8 80deg, #a6cbf5 100deg, #3d86dc 110deg, #2a6fc9 125deg, #b0d0f6 133deg, #b7d5f8 165deg, #4a90e2 172deg, #1f5fb8 180deg, #c0dcfa 186deg, #3d86dc 194deg, #0e2a55 212deg, #0b2348 248deg, #1d5cb0 262deg, #3d86dc 280deg, #8fbdf0 296deg, #b4d3f7 308deg, #b7d5f8 360deg);filter:blur(0.7px);"></div>
<span class="t" style="top:563.67px;font-size:15px;line-height:20px;color:#111;-webkit-text-stroke:0.3px #111;letter-spacing:0.12px;left:614.9px;">Rachel</span>
<span class="t" style="top:586.17px;font-size:15px;line-height:20px;color:#777;letter-spacing:-0.05px;left:614.9px;">A calm and soothing american…</span>
<div style="left:548.2px;top:618.6px;width:315px;height:1px;background:#f0f0f0;"></div>
<div style="left:560.3px;top:634.3px;width:41.6px;height:41.6px;border-radius:50%;background:conic-gradient(from 0deg at 48% 52%, #b7d5f8 0deg, #b9d6f8 80deg, #a6cbf5 100deg, #3d86dc 110deg, #2a6fc9 125deg, #b0d0f6 133deg, #b7d5f8 165deg, #4a90e2 172deg, #1f5fb8 180deg, #c0dcfa 186deg, #3d86dc 194deg, #0e2a55 212deg, #0b2348 248deg, #1d5cb0 262deg, #3d86dc 280deg, #8fbdf0 296deg, #b4d3f7 308deg, #b7d5f8 360deg);filter:blur(0.7px);"></div>
<span class="t" style="top:635.97px;font-size:15px;line-height:20px;color:#111;-webkit-text-stroke:0.3px #111;letter-spacing:0.12px;left:614.9px;">Domi</span>
<span class="t" style="top:658.47px;font-size:15px;line-height:20px;color:#777;letter-spacing:-0.01px;left:614.9px;">Strong and confident american…</span>
<div style="left:548.2px;top:690.9px;width:315px;height:1px;background:#f0f0f0;"></div>
<div style="left:560.3px;top:706.6px;width:41.6px;height:41.6px;border-radius:50%;background:conic-gradient(from 0deg at 48% 56%, #9dbcf3 0deg, #b9d0f8 40deg, #8fb0f0 70deg, #a8c4f6 110deg, #7f9fec 140deg, #2a20c0 155deg, #1a149a 168deg, #6f90e8 180deg, #a9c6f5 200deg, #5f86e6 225deg, #2a2fc8 240deg, #7fa0ec 255deg, #9ab8f2 290deg, #86a8ee 330deg, #9dbcf3 360deg);filter:blur(0.7px);"></div>
<span class="t" style="top:708.27px;font-size:15px;line-height:20px;color:#111;-webkit-text-stroke:0.3px #111;letter-spacing:0.39px;left:614.9px;">Bella</span>
<span class="t" style="top:730.77px;font-size:15px;line-height:20px;color:#777;letter-spacing:-0.03px;left:614.9px;">Soft and gentle, ideal for…</span>
<div style="left:548.2px;top:763.2px;width:315px;height:1px;background:#f0f0f0;"></div>
<div style="left:560.3px;top:778.9px;width:41.6px;height:41.6px;border-radius:50%;background:radial-gradient(ellipse 62% 20% at 50% 44%, #d4e7fc 0%, #d4e7fc 55%, rgba(212,231,252,0) 100%),conic-gradient(from 0deg at 50% 60%, #3d8be0 0deg, #4a94e4 30deg, #cfe4fb 48deg, #d6e8fc 95deg, #5aa0e8 105deg, #2a6cc4 118deg, #b8d6f8 128deg, #3c83d8 140deg, #0f2d5c 150deg, #a9cdf5 158deg, #2a6cc4 170deg, #0e2a55 180deg, #cfe4fb 188deg, #3c83d8 200deg, #9cc3f0 222deg, #7a3a22 238deg, #8a4a30 254deg, #5aa0e8 264deg, #cfe4fb 275deg, #d6e8fc 312deg, #4a94e4 330deg, #3d8be0 360deg);filter:blur(0.7px);"></div>
<span class="t" style="top:780.57px;font-size:15px;line-height:20px;color:#111;-webkit-text-stroke:0.3px #111;letter-spacing:0.36px;left:614.9px;">Antoni</span>
<span class="t" style="top:803.07px;font-size:15px;line-height:20px;color:#777;letter-spacing:-0.1px;left:614.9px;">Balanced and professional,…</span>
<div style="left:548.2px;top:835.5px;width:315px;height:1px;background:#f0f0f0;"></div>
<div style="left:560.3px;top:851.2px;width:41.6px;height:41.6px;border-radius:50%;background:conic-gradient(from 0deg at 48% 52%, #b7d5f8 0deg, #b9d6f8 80deg, #a6cbf5 100deg, #3d86dc 110deg, #2a6fc9 125deg, #b0d0f6 133deg, #b7d5f8 165deg, #4a90e2 172deg, #1f5fb8 180deg, #c0dcfa 186deg, #3d86dc 194deg, #0e2a55 212deg, #0b2348 248deg, #1d5cb0 262deg, #3d86dc 280deg, #8fbdf0 296deg, #b4d3f7 308deg, #b7d5f8 360deg);filter:blur(0.7px);"></div>
<span class="t" style="top:852.87px;font-size:15px;line-height:20px;color:#111;-webkit-text-stroke:0.3px #111;letter-spacing:0.25px;left:614.9px;">Elli</span>
<span class="t" style="top:875.37px;font-size:15px;line-height:20px;color:#777;letter-spacing:0.01px;left:614.9px;">Clear and articulate, excellent fo…</span>
<svg style="left:546.8px;top:942px;" width="16" height="16" viewBox="0 0 24 24" fill="none" stroke="#111" stroke-width="2" stroke-linecap="round" stroke-linejoin="round"><path d="m5 8 6 6"/><path d="m4 14 6-6 2-3"/><path d="M2 5h12"/><path d="M7 2h1"/><path d="m22 22-5-10-5 10"/><path d="M14 18h6"/></svg>
<span class="t" style="top:940.17px;font-size:15px;line-height:20px;color:#111;-webkit-text-stroke:0.45px #111;letter-spacing:0.13px;left:572.5px;">Dubbing</span>
<div style="left:547.2px;top:978.2px;width:325.8px;height:33px;border:1px solid #e5e5e5;border-radius:9px;background:#fff;box-shadow:0 1px 2px rgba(0,0,0,0.05);"></div>
<span class="t" style="top:984.77px;font-size:15px;line-height:20px;color:#111;letter-spacing:-0.2px;left:560px;">Select language…</span>
<svg style="left:843.1px;top:987.5px;" width="15" height="15" viewBox="0 0 24 24" fill="none" stroke="#666" stroke-width="1.8" stroke-linecap="round" stroke-linejoin="round"><path d="m6 9 6 6 6-6"/></svg>
<svg style="left:546.8px;top:1048px;" width="16" height="16" viewBox="0 0 24 24" fill="none" stroke="#111" stroke-width="2" stroke-linecap="round" stroke-linejoin="round"><path d="m21.640 3.640-1.280-1.280a1.210 1.210 0 0 0-1.720 0L2.360 18.640a1.210 1.210 0 0 0 0 1.720l1.280 1.280a1.200 1.200 0 0 0 1.720 0L21.640 5.360a1.200 1.200 0 0 0 0-1.720"/><path d="m14 7 3 3"/><path d="M5 6v4"/><path d="M19 14v4"/><path d="M10 2v2"/><path d="M7 8H3"/><path d="M21 16h-4"/><path d="M11 3H9"/></svg>
<span class="t" style="top:1046.17px;font-size:15px;line-height:20px;color:#111;-webkit-text-stroke:0.45px #111;letter-spacing:0.22px;left:572.5px;">Enhancement</span>
<div style="left:547.2px;top:1083.6px;width:325.8px;height:58px;border:1px solid #ebebeb;border-radius:9px;background:#fff;"></div>
<span class="t" style="top:1093.87px;font-size:15px;line-height:20px;color:#111;-webkit-text-stroke:0.35px #111;letter-spacing:0.17px;left:560px;">Remove Background Noise</span>
<span class="t" style="top:1113.94px;font-size:12.5px;line-height:16px;color:#777;letter-spacing:0.27px;left:560px;">Use AI to clarify speech and reduce noise</span>
<div style="left:821.3px;top:1100px;width:37.7px;height:17px;background:#e5e5e5;border-radius:8.5px;"></div>
<div style="left:823px;top:1101.7px;width:13.6px;height:13.6px;border-radius:50%;background:#fff;box-shadow:0 1px 2px rgba(0,0,0,0.1);"></div>
<div style="left:1459px;top:425.8px;width:315px;height:560.7px;background:#0f100f;border-radius:12px;overflow:hidden;"><div class="a" style="left:4px;top:10.2px;width:26px;height:26px;background:#3b3a72;border-radius:6px;filter:blur(5px);opacity:.75;"></div><div class="a" style="left:41px;top:15.2px;width:16px;height:14px;background:#2a2b33;border-radius:5px;filter:blur(5px);opacity:.8;"></div><div class="a" style="left:75px;top:15.2px;width:16px;height:14px;background:#2a2b33;border-radius:5px;filter:blur(5px);opacity:.8;"></div><div class="a" style="left:109px;top:15.2px;width:16px;height:14px;background:#2a2b33;border-radius:5px;filter:blur(5px);opacity:.8;"></div><div class="a" style="left:143px;top:15.2px;width:16px;height:14px;background:#2a2b33;border-radius:5px;filter:blur(5px);opacity:.8;"></div><div class="a" style="left:177px;top:15.2px;width:16px;height:14px;background:#2a2b33;border-radius:5px;filter:blur(5px);opacity:.8;"></div><div class="a" style="left:211px;top:15.2px;width:16px;height:14px;background:#2a2b33;border-radius:5px;filter:blur(5px);opacity:.8;"></div><div class="a" style="left:245px;top:15.2px;width:16px;height:14px;background:#2a2b33;border-radius:5px;filter:blur(5px);opacity:.8;"></div><div class="a" style="left:279px;top:15.2px;width:16px;height:14px;background:#2a2b33;border-radius:5px;filter:blur(5px);opacity:.8;"></div><div class="a" style="left:56px;top:62.2px;width:200px;height:14px;background:#1c1d22;filter:blur(5px);"></div><div class="a" style="left:213px;top:369.2px;width:110px;height:18px;background:#2c2d30;filter:blur(5px);"></div><div class="a" style="left:241px;top:394.2px;width:60px;height:10px;background:#222326;filter:blur(5px);"></div><div class="a" style="left:241px;top:416.2px;width:60px;height:10px;background:#222326;filter:blur(5px);"></div><div class="a" style="left:227px;top:432.2px;width:100px;height:18px;background:#2c2d30;filter:blur(5px);"></div><div class="a" style="left:253px;top:460.2px;width:50px;height:9px;background:#222326;filter:blur(5px);"></div><div class="a" style="left:0px;top:374.2px;width:46px;height:10px;background:#1e1f22;filter:blur(5px);"></div><div class="a" style="left:0px;top:191.7px;width:315px;height:176.5px;background:#0f100f;"></div><div class="a" style="left:0px;top:192.2px;width:315px;height:7.7px;background:#161c27;"></div><div class="a" style="left:3.2px;top:194.8px;width:2.6px;height:2.6px;background:#ee5c54;border-radius:50%;"></div><div class="a" style="left:7.9px;top:194.8px;width:2.6px;height:2.6px;background:#f0b429;border-radius:50%;"></div><div class="a" style="left:12.6px;top:194.8px;width:2.6px;height:2.6px;background:#3dc24b;border-radius:50%;"></div><div class="a" style="left:43px;top:193px;width:57px;height:6.2px;background:#2a3342;border-radius:3px;"></div><div class="a" style="left:-31px;top:194.28px;width:200px;text-align:center;font-size:3.2px;line-height:3.84px;color:#c8ccd4;white-space:nowrap;">canvas.t3.chat</div><div class="a" style="left:120px;top:195.2px;width:2px;height:2px;background:#e8e8e8;border-radius:50%;"></div><div class="a" style="left:124px;top:195.5px;width:4px;height:1.4px;background:#5b6373;"></div><div class="a" style="left:133.3px;top:195.2px;width:2px;height:2px;background:#e8e8e8;border-radius:50%;"></div><div class="a" style="left:137.3px;top:195.5px;width:4px;height:1.4px;background:#5b6373;"></div><div class="a" style="left:146.6px;top:195.2px;width:2px;height:2px;background:#e8e8e8;border-radius:50%;"></div><div class="a" style="left:150.6px;top:195.5px;width:4px;height:1.4px;background:#5b6373;"></div><div class="a" style="left:159.9px;top:195.2px;width:2px;height:2px;background:#e8e8e8;border-radius:50%;"></div><div class="a" style="left:163.9px;top:195.5px;width:4px;height:1.4px;background:#5b6373;"></div><div class="a" style="left:173.2px;top:195.2px;width:2px;height:2px;background:#e8e8e8;border-radius:50%;"></div><div class="a" style="left:177.2px;top:195.5px;width:4px;height:1.4px;background:#5b6373;"></div><div class="a" style="left:186.5px;top:195.2px;width:2px;height:2px;background:#e8e8e8;border-radius:50%;"></div><div class="a" style="left:190.5px;top:195.5px;width:4px;height:1.4px;background:#5b6373;"></div><div class="a" style="left:199.8px;top:195.2px;width:2px;height:2px;background:#e8e8e8;border-radius:50%;"></div><div class="a" style="left:203.8px;top:195.5px;width:4px;height:1.4px;background:#5b6373;"></div><div class="a" style="left:213.1px;top:195.2px;width:2px;height:2px;background:#e8e8e8;border-radius:50%;"></div><div class="a" style="left:217.1px;top:195.5px;width:4px;height:1.4px;background:#5b6373;"></div><div class="a" style="left:226.4px;top:195.2px;width:2px;height:2px;background:#e8e8e8;border-radius:50%;"></div><div class="a" style="left:230.4px;top:195.5px;width:4px;height:1.4px;background:#5b6373;"></div><div class="a" style="left:239.7px;top:195.2px;width:2px;height:2px;background:#e8e8e8;border-radius:50%;"></div><div class="a" style="left:243.7px;top:195.5px;width:4px;height:1.4px;background:#5b6373;"></div><div class="a" style="left:203.5px;top:193.8px;width:3.6px;height:3.6px;background:#e91ec8;border-radius:1px;"></div><div class="a" style="left:250px;top:192.8px;width:11px;height:6.6px;background:#39465c;border-radius:1.5px;"></div><div class="a" style="left:5px;top:204.7px;width:8px;height:8px;background:#1c1d22;border-radius:2px;"></div><div class="a" style="left:15.5px;top:204.7px;width:8px;height:8px;background:#1c1d22;border-radius:2px;"></div><div class="a" style="left:-67px;top:206.76px;width:200px;text-align:center;font-size:3.4px;line-height:4.08px;color:#d8d8d8;white-space:nowrap;">Opus 4.5</div><div class="a" style="left:90px;top:204.5px;width:135px;height:10px;background:#1c1d22;border-radius:2px;"></div><div class="a" style="left:113.8px;top:205px;width:8.6px;height:9px;background:#3f3c7c;border-radius:2px;"></div><div class="a" style="left:93.6px;top:208.6px;width:3.2px;height:2.4px;background:#8a8b92;border-radius:1px;"></div><div class="a" style="left:103.2px;top:208.6px;width:3.2px;height:2.4px;background:#8a8b92;border-radius:1px;"></div><div class="a" style="left:122.4px;top:208.6px;width:3.2px;height:2.4px;background:#8a8b92;border-radius:1px;"></div><div class="a" style="left:132px;top:208.6px;width:3.2px;height:2.4px;background:#8a8b92;border-radius:1px;"></div><div class="a" style="left:141.6px;top:208.6px;width:3.2px;height:2.4px;background:#8a8b92;border-radius:1px;"></div><div class="a" style="left:151.2px;top:208.6px;width:3.2px;height:2.4px;background:#8a8b92;border-radius:1px;"></div><div class="a" style="left:160.8px;top:208.6px;width:3.2px;height:2.4px;background:#8a8b92;border-radius:1px;"></div><div class="a" style="left:170.4px;top:208.6px;width:3.2px;height:2.4px;background:#8a8b92;border-radius:1px;"></div><div class="a" style="left:180px;top:208.6px;width:3.2px;height:2.4px;background:#8a8b92;border-radius:1px;"></div><div class="a" style="left:189.6px;top:208.6px;width:3.2px;height:2.4px;background:#8a8b92;border-radius:1px;"></div><div class="a" style="left:199.2px;top:208.6px;width:3.2px;height:2.4px;background:#8a8b92;border-radius:1px;"></div><div class="a" style="left:211.8px;top:208.6px;width:3.2px;height:2.4px;background:#8a8b92;border-radius:1px;"></div><div class="a" style="left:130px;top:219.6px;width:56px;height:1px;background:#3a3b40;"></div><div class="a" style="left:5px;top:218.9px;width:50px;height:113px;background:#1c1d22;border-radius:2.5px;"></div><div class="a" style="left:8px;top:223.4px;width:4.5px;height:1.4px;background:#8a8b92;"></div><div class="a" style="left:7.8px;top:228.4px;width:5.8px;height:5.8px;background:#dcdcdc;border-radius:1px;"></div><div class="a" style="left:14.8px;top:228.4px;width:5.8px;height:5.8px;background:#f28482;border-radius:1px;"></div><div class="a" style="left:21.8px;top:228.4px;width:5.8px;height:5.8px;background:#3fa34d;border-radius:1px;"></div><div class="a" style="left:28.8px;top:228.4px;width:5.8px;height:5.8px;background:#4dabf7;border-radius:1px;"></div><div class="a" style="left:35.8px;top:228.4px;width:5.8px;height:5.8px;background:#db7512;border-radius:1px;"></div><div class="a" style="left:45.8px;top:228.4px;width:5.8px;height:5.8px;background:#dcdcdc;border-radius:1px;"></div><div class="a" style="left:8px;top:247.7px;width:7.6px;height:7.6px;background:#3f3c7c;border-radius:1.6px;"></div><div class="a" style="left:17.8px;top:247.7px;width:7.6px;height:7.6px;background:#26272d;border-radius:1.6px;"></div><div class="a" style="left:27.6px;top:247.7px;width:7.6px;height:7.6px;background:#26272d;border-radius:1.6px;"></div><div class="a" style="left:37.4px;top:247.7px;width:7.6px;height:7.6px;background:#26272d;border-radius:1.6px;"></div><div class="a" style="left:8px;top:266px;width:7.6px;height:7.6px;background:#26272d;border-radius:1.6px;"></div><div class="a" style="left:17.6px;top:266px;width:7.6px;height:7.6px;background:#3f3c7c;border-radius:1.6px;"></div><div class="a" style="left:27.2px;top:266px;width:7.6px;height:7.6px;background:#26272d;border-radius:1.6px;"></div><div class="a" style="left:36.8px;top:266px;width:7.6px;height:7.6px;background:#26272d;border-radius:1.6px;"></div><div class="a" style="left:8px;top:284.4px;width:7.6px;height:7.6px;background:#26272d;border-radius:1.6px;"></div><div class="a" style="left:17.8px;top:284.4px;width:7.6px;height:7.6px;background:#3f3c7c;border-radius:1.6px;"></div><div class="a" style="left:27.6px;top:284.4px;width:7.6px;height:7.6px;background:#26272d;border-radius:1.6px;"></div><div class="a" style="left:8px;top:320.4px;width:7.6px;height:7.6px;background:#26272d;border-radius:1.6px;"></div><div class="a" style="left:17.8px;top:320.4px;width:7.6px;height:7.6px;background:#26272d;border-radius:1.6px;"></div><div class="a" style="left:27.6px;top:320.4px;width:7.6px;height:7.6px;background:#26272d;border-radius:1.6px;"></div><div class="a" style="left:37.4px;top:320.4px;width:7.6px;height:7.6px;background:#26272d;border-radius:1.6px;"></div><div class="a" style="left:8px;top:240.8px;width:13px;height:1.4px;background:#8a8b92;"></div><div class="a" style="left:8px;top:262px;width:10px;height:1.4px;background:#8a8b92;"></div><div class="a" style="left:8px;top:280.4px;width:12px;height:1.4px;background:#8a8b92;"></div><div class="a" style="left:8px;top:298.4px;width:9px;height:1.4px;background:#8a8b92;"></div><div class="a" style="left:8px;top:316.6px;width:7px;height:1.4px;background:#8a8b92;"></div><div class="a" style="left:8px;top:303.2px;width:43px;height:1px;background:#3f3c7c;"></div><div class="a" style="left:49.5px;top:301.8px;width:3px;height:3px;background:#4a4b55;border-radius:50%;"></div><div class="a" style="left:265.2px;top:199.9px;width:44px;height:56.3px;background:linear-gradient(180deg,#2a2522 0%,#231f1d 100%);"></div><div class="a" style="left:271px;top:231.2px;width:38px;height:25px;background:#2f2f30;border-radius:10px 8px 0 0;"></div><div class="a" style="left:279.5px;top:208.2px;width:20px;height:27px;background:#b98d7c;border-radius:45% 45% 48% 48%;"></div><div class="a" style="left:277px;top:203.7px;width:25px;height:13px;background:#1a1513;border-radius:50% 50% 30% 30%;"></div><div class="a" style="left:276.5px;top:208.2px;width:6px;height:14px;background:#1a1513;border-radius:40%;"></div><div class="a" style="left:285.5px;top:228.2px;width:5.5px;height:20px;background:#4a4745;border-radius:2px;"></div><div class="a" style="left:277px;top:244.2px;width:14px;height:4.5px;background:#b39a4a;opacity:.75;"></div><div class="a" style="left:18.2px;top:269.28px;width:200px;text-align:center;font-size:7.2px;line-height:8.64px;color:#f0f0f0;white-space:nowrap;">&quot;Output Ceiling&quot;</div><div class="a" style="left:17.3px;top:281.38px;width:200px;text-align:center;font-size:4.2px;line-height:5.04px;color:#e4e4e4;white-space:nowrap;">GPT-5.1-Pro</div><div class="a" style="left:17.3px;top:287.58px;width:200px;text-align:center;font-size:4.2px;line-height:5.04px;color:#e4e4e4;white-space:nowrap;">Opus 4.5</div><div class="a" style="left:17.3px;top:293.78px;width:200px;text-align:center;font-size:4.2px;line-height:5.04px;color:#e4e4e4;white-space:nowrap;">Gemini 3 Pro</div><div class="a" style="left:17.3px;top:299.98px;width:200px;text-align:center;font-size:4.2px;line-height:5.04px;color:#e4e4e4;white-space:nowrap;">Sonnet 4.5</div><div class="a" style="left:110px;top:308.2px;width:14px;height:0.8px;background:#777;"></div><div class="a" style="left:92.5px;top:269.08px;width:200px;text-align:center;font-size:7.2px;line-height:8.64px;color:#f0f0f0;white-space:nowrap;">Consistency</div><div class="a" style="left:92.3px;top:280.98px;width:200px;text-align:center;font-size:4.2px;line-height:5.04px;color:#e4e4e4;white-space:nowrap;">Opus 4.5</div><div class="a" style="left:92.3px;top:287.13px;width:200px;text-align:center;font-size:4.2px;line-height:5.04px;color:#e4e4e4;white-space:nowrap;">Sonnet 4.5</div><div class="a" style="left:92.3px;top:293.28px;width:200px;text-align:center;font-size:4.2px;line-height:5.04px;color:#e4e4e4;white-space:nowrap;">Composer-1</div><div class="a" style="left:92.3px;top:299.43px;width:200px;text-align:center;font-size:4.2px;line-height:5.04px;color:#e4e4e4;white-space:nowrap;">GPT-5</div><div class="a" style="left:92.3px;top:305.58px;width:200px;text-align:center;font-size:4.2px;line-height:5.04px;color:#e4e4e4;white-space:nowrap;">GPT-5.1-Codex</div><div class="a" style="left:186px;top:314.4px;width:12.5px;height:0.9px;background:#bbb;"></div><div class="a" style="left:186px;top:320.2px;width:12.5px;height:0.9px;background:#bbb;"></div><div class="a" style="left:92px;top:324.28px;width:200px;text-align:center;font-size:4.2px;line-height:5.04px;color:#e4e4e4;white-space:nowrap;">Gemini 3 Pro</div><div class="a" style="left:185px;top:332.5px;width:14px;height:0.7px;background:#555;"></div><div class="a" style="left:5px;top:356px;width:32.5px;height:8.6px;background:#1a1b1f;border-radius:2px;"></div><div class="a" style="left:-78.5px;top:358.48px;width:200px;text-align:center;font-size:3.2px;line-height:3.84px;color:#bbb;white-space:nowrap;">60%</div><div class="a" style="left:39.8px;top:356px;width:18px;height:8.6px;background:#1a1b1f;border-radius:2px;"></div><div class="a" style="left:62px;top:356px;width:8.6px;height:8.6px;background:#1a1b1f;border-radius:2px;"></div><div class="a" style="left:73px;top:356px;width:8.6px;height:8.6px;background:#1a1b1f;border-radius:2px;"></div><div class="a" style="left:302px;top:356px;width:8.6px;height:8.6px;background:#1a1b1f;border-radius:2px;"></div><div class="a" style="left:0px;top:367.8px;width:315px;height:0.8px;background:#242528;"></div></div>
<div style="left:462.2px;top:1153px;width:1872.5px;height:52px;background:#fafafa;border:1px solid #ededed;"></div>
<svg style="left:498.3px;top:1172.7px;" width="13" height="13" viewBox="0 0 24 24" fill="none" stroke="#111" stroke-width="2.2" stroke-linecap="round" stroke-linejoin="round"><path d="m6 9 6 6 6-6"/></svg>
<span class="t" style="top:1169.76px;font-size:13.5px;line-height:18px;color:#666;left:530px;">Hide timeline</span>
<svg style="left:1237.5px;top:1172.5px;" width="13" height="13" viewBox="0 0 24 24" fill="none" stroke="#111" stroke-width="2" stroke-linecap="round" stroke-linejoin="round"><path d="m11 17-5-5 5-5"/><path d="m18 17-5-5 5-5"/></svg>
<svg style="left:1279.5px;top:1172.5px;" width="13" height="13" viewBox="0 0 24 24" fill="none" stroke="#111" stroke-width="1.6" stroke-linecap="round" stroke-linejoin="round"><rect x="14" y="4" width="4.500" height="16" rx="1.500" fill="#909090"/><rect x="5.500" y="4" width="4.500" height="16" rx="1.500" fill="#909090"/></svg>
<svg style="left:1321.5px;top:1172.5px;" width="13" height="13" viewBox="0 0 24 24" fill="none" stroke="#111" stroke-width="2" stroke-linecap="round" stroke-linejoin="round"><path d="m6 17 5-5-5-5"/><path d="m13 17 5-5-5-5"/></svg>
<span class="t" style="top:1169.96px;font-size:14px;line-height:18px;color:#6a6a6a;left:1362px;">00:00.00 / 1:03s</span>
<svg style="left:2100.6px;top:1172.9px;" width="12.6" height="12.6" viewBox="0 0 24 24" fill="none" stroke="#666" stroke-width="2" stroke-linecap="round" stroke-linejoin="round"><circle cx="11" cy="11" r="8"/><path d="m21 21-4.350-4.350"/><path d="M8 11h6"/></svg>
<svg style="left:2286.2px;top:1172.9px;" width="12.6" height="12.6" viewBox="0 0 24 24" fill="none" stroke="#666" stroke-width="2" stroke-linecap="round" stroke-linejoin="round"><circle cx="11" cy="11" r="8"/><path d="m21 21-4.350-4.350"/><path d="M8 11h6"/><path d="M11 8v6"/></svg>
<div style="left:2132px;top:1177px;width:131px;height:8px;background:#171717;border-radius:4px;"></div>
<div style="left:2247.1px;top:1170.8px;width:20.2px;height:20.2px;border-radius:50%;background:#fff;border:2px solid #171717;"></div>
<div style="left:463.2px;top:1238px;width:1870.5px;height:1px;background:#eeeeee;"></div>
<div style="left:482.9px;top:1205px;width:1px;height:33px;background:#e6e6e6;"></div>
<div style="left:904.1px;top:1205px;width:1px;height:33px;background:#e6e6e6;"></div>
<div style="left:1331.3px;top:1205px;width:1px;height:33px;background:#e6e6e6;"></div>
<div style="left:1751.9px;top:1205px;width:1px;height:33px;background:#e6e6e6;"></div>
<div style="left:2178.6px;top:1205px;width:1px;height:33px;background:#f5f5f5;"></div>
<span class="t" style="top:1205.72px;font-size:10.5px;line-height:14px;color:#888;letter-spacing:0.2px;left:467px;">0s</span>
<span class="t" style="top:1205.72px;font-size:10.5px;line-height:14px;color:#888;letter-spacing:0.2px;left:888.5px;">5s</span>
<span class="t" style="top:1206.21px;font-size:10px;line-height:13px;color:#888;letter-spacing:-0.04px;left:1310px;">10s</span>
<span class="t" style="top:1206.21px;font-size:10px;line-height:13px;color:#888;letter-spacing:-0.04px;left:1731.4px;">15s</span>
<span class="t" style="top:1205.72px;font-size:10.5px;line-height:14px;color:#888;letter-spacing:0.52px;left:2153.5px;">20s</span>
<div style="left:471.3px;top:1247.5px;width:1863.4px;height:117px;background:#f7f7f7;border:1px solid #ececec;border-right:none;border-radius:5px 0 0 5px;"></div>
<div style="left:471.3px;top:1247.5px;width:1862.4px;height:117px;border-radius:5px 0 0 5px;overflow:hidden;"><div class="a" style="left:0px;top:0px;width:1864.4px;height:67.1px;background:#0e0f0e;"></div><div class="a" style="left:6.7px;top:0px;width:64.8px;height:67.1px;background:#1b1c20;"></div><div class="a" style="left:16px;top:9.5px;width:10px;height:1.2px;background:#77787e;"></div><div class="a" style="left:10.6px;top:15.5px;width:9.6px;height:9.6px;background:#27282e;border-radius:2px;"></div><div class="a" style="left:23.4px;top:15.5px;width:9.6px;height:9.6px;background:#3f3c7c;border-radius:2px;"></div><div class="a" style="left:36.2px;top:15.5px;width:9.6px;height:9.6px;background:#27282e;border-radius:2px;"></div><div class="a" style="left:49px;top:15.5px;width:9.6px;height:9.6px;background:#27282e;border-radius:2px;"></div><div class="a" style="left:16px;top:33.1px;width:11px;height:1.2px;background:#77787e;"></div><div class="a" style="left:10.6px;top:39.2px;width:9.6px;height:9.6px;background:#27282e;border-radius:2px;"></div><div class="a" style="left:23.4px;top:39.2px;width:9.6px;height:9.6px;background:#3f3c7c;border-radius:2px;"></div><div class="a" style="left:36.2px;top:39.2px;width:9.6px;height:9.6px;background:#27282e;border-radius:2px;"></div><div class="a" style="left:16px;top:56.7px;width:8px;height:1.2px;background:#77787e;"></div><div class="a" style="left:16px;top:62.9px;width:52px;height:1px;background:#3f3c7c;"></div><div class="a" style="left:53.2px;top:19.58px;width:200px;text-align:center;font-size:9.2px;line-height:11.04px;color:#f2f2f2;white-space:nowrap;letter-spacing:0.25px;">&quot;Output Ceiling&quot;</div><div class="a" style="left:52.2px;top:34.7px;width:200px;text-align:center;font-size:6px;line-height:7.2px;color:#e6e6e6;white-space:nowrap;letter-spacing:0.1px;">GPT-5.1-Pro</div><div class="a" style="left:52.2px;top:42.65px;width:200px;text-align:center;font-size:6px;line-height:7.2px;color:#e6e6e6;white-space:nowrap;letter-spacing:0.1px;">Opus 4.5</div><div class="a" style="left:52.2px;top:50.6px;width:200px;text-align:center;font-size:6px;line-height:7.2px;color:#e6e6e6;white-space:nowrap;letter-spacing:0.1px;">Gemini 3 Pro</div><div class="a" style="left:52.2px;top:58.55px;width:200px;text-align:center;font-size:6px;line-height:7.2px;color:#e6e6e6;white-space:nowrap;letter-spacing:0.1px;">Sonnet 4.5</div><div class="a" style="left:149.8px;top:19.18px;width:200px;text-align:center;font-size:9.2px;line-height:11.04px;color:#f2f2f2;white-space:nowrap;letter-spacing:0.25px;">Consistency</div><div class="a" style="left:149.1px;top:34.4px;width:200px;text-align:center;font-size:6px;line-height:7.2px;color:#e6e6e6;white-space:nowrap;letter-spacing:0.1px;">Opus 4.5</div><div class="a" style="left:149.1px;top:42.35px;width:200px;text-align:center;font-size:6px;line-height:7.2px;color:#e6e6e6;white-space:nowrap;letter-spacing:0.1px;">Sonnet 4.5</div><div class="a" style="left:149.1px;top:50.3px;width:200px;text-align:center;font-size:6px;line-height:7.2px;color:#e6e6e6;white-space:nowrap;letter-spacing:0.1px;">Composer-1</div><div class="a" style="left:149.1px;top:58.25px;width:200px;text-align:center;font-size:6px;line-height:7.2px;color:#e6e6e6;white-space:nowrap;letter-spacing:0.1px;">GPT-5</div><div class="a" style="left:407.95px;top:0px;width:1.2px;height:67.1px;background:#4a4b4a;"></div><div class="a" style="left:415.25px;top:0px;width:64.8px;height:67.1px;background:#1b1c20;"></div><div class="a" style="left:424.55px;top:9.5px;width:10px;height:1.2px;background:#77787e;"></div><div class="a" style="left:419.15px;top:15.5px;width:9.6px;height:9.6px;background:#27282e;border-radius:2px;"></div><div class="a" style="left:431.95px;top:15.5px;width:9.6px;height:9.6px;background:#3f3c7c;border-radius:2px;"></div><div class="a" style="left:444.75px;top:15.5px;width:9.6px;height:9.6px;background:#27282e;border-radius:2px;"></div><div class="a" style="left:457.55px;top:15.5px;width:9.6px;height:9.6px;background:#27282e;border-radius:2px;"></div><div class="a" style="left:424.55px;top:33.1px;width:11px;height:1.2px;background:#77787e;"></div><div class="a" style="left:419.15px;top:39.2px;width:9.6px;height:9.6px;background:#27282e;border-radius:2px;"></div><div class="a" style="left:431.95px;top:39.2px;width:9.6px;height:9.6px;background:#3f3c7c;border-radius:2px;"></div><div class="a" style="left:444.75px;top:39.2px;width:9.6px;height:9.6px;background:#27282e;border-radius:2px;"></div><div class="a" style="left:424.55px;top:56.7px;width:8px;height:1.2px;background:#77787e;"></div><div class="a" style="left:424.55px;top:62.9px;width:52px;height:1px;background:#3f3c7c;"></div><div class="a" style="left:461.75px;top:19.58px;width:200px;text-align:center;font-size:9.2px;line-height:11.04px;color:#f2f2f2;white-space:nowrap;letter-spacing:0.25px;">&quot;Output Ceiling&quot;</div><div class="a" style="left:460.75px;top:34.7px;width:200px;text-align:center;font-size:6px;line-height:7.2px;color:#e6e6e6;white-space:nowrap;letter-spacing:0.1px;">GPT-5.1-Pro</div><div class="a" style="left:460.75px;top:42.65px;width:200px;text-align:center;font-size:6px;line-height:7.2px;color:#e6e6e6;white-space:nowrap;letter-spacing:0.1px;">Opus 4.5</div><div class="a" style="left:460.75px;top:50.6px;width:200px;text-align:center;font-size:6px;line-height:7.2px;color:#e6e6e6;white-space:nowrap;letter-spacing:0.1px;">Gemini 3 Pro</div><div class="a" style="left:460.75px;top:58.55px;width:200px;text-align:center;font-size:6px;line-height:7.2px;color:#e6e6e6;white-space:nowrap;letter-spacing:0.1px;">Sonnet 4.5</div><div class="a" style="left:558.35px;top:19.18px;width:200px;text-align:center;font-size:9.2px;line-height:11.04px;color:#f2f2f2;white-space:nowrap;letter-spacing:0.25px;">Consistency</div><div class="a" style="left:557.65px;top:34.4px;width:200px;text-align:center;font-size:6px;line-height:7.2px;color:#e6e6e6;white-space:nowrap;letter-spacing:0.1px;">Opus 4.5</div><div class="a" style="left:557.65px;top:42.35px;width:200px;text-align:center;font-size:6px;line-height:7.2px;color:#e6e6e6;white-space:nowrap;letter-spacing:0.1px;">Sonnet 4.5</div><div class="a" style="left:557.65px;top:50.3px;width:200px;text-align:center;font-size:6px;line-height:7.2px;color:#e6e6e6;white-space:nowrap;letter-spacing:0.1px;">Composer-1</div><div class="a" style="left:557.65px;top:58.25px;width:200px;text-align:center;font-size:6px;line-height:7.2px;color:#e6e6e6;white-space:nowrap;letter-spacing:0.1px;">GPT-5</div><div class="a" style="left:816.5px;top:0px;width:1.2px;height:67.1px;background:#4a4b4a;"></div><div class="a" style="left:823.8px;top:0px;width:64.8px;height:67.1px;background:#1b1c20;"></div><div class="a" style="left:833.1px;top:9.5px;width:10px;height:1.2px;background:#77787e;"></div><div class="a" style="left:827.7px;top:15.5px;width:9.6px;height:9.6px;background:#27282e;border-radius:2px;"></div><div class="a" style="left:840.5px;top:15.5px;width:9.6px;height:9.6px;background:#3f3c7c;border-radius:2px;"></div><div class="a" style="left:853.3px;top:15.5px;width:9.6px;height:9.6px;background:#27282e;border-radius:2px;"></div><div class="a" style="left:866.1px;top:15.5px;width:9.6px;height:9.6px;background:#27282e;border-radius:2px;"></div><div class="a" style="left:833.1px;top:33.1px;width:11px;height:1.2px;background:#77787e;"></div><div class="a" style="left:827.7px;top:39.2px;width:9.6px;height:9.6px;background:#27282e;border-radius:2px;"></div><div class="a" style="left:840.5px;top:39.2px;width:9.6px;height:9.6px;background:#3f3c7c;border-radius:2px;"></div><div class="a" style="left:853.3px;top:39.2px;width:9.6px;height:9.6px;background:#27282e;border-radius:2px;"></div><div class="a" style="left:833.1px;top:56.7px;width:8px;height:1.2px;background:#77787e;"></div><div class="a" style="left:833.1px;top:62.9px;width:52px;height:1px;background:#3f3c7c;"></div><div class="a" style="left:870.3px;top:19.58px;width:200px;text-align:center;font-size:9.2px;line-height:11.04px;color:#f2f2f2;white-space:nowrap;letter-spacing:0.25px;">&quot;Output Ceiling&quot;</div><div class="a" style="left:869.3px;top:34.7px;width:200px;text-align:center;font-size:6px;line-height:7.2px;color:#e6e6e6;white-space:nowrap;letter-spacing:0.1px;">GPT-5.1-Pro</div><div class="a" style="left:869.3px;top:42.65px;width:200px;text-align:center;font-size:6px;line-height:7.2px;color:#e6e6e6;white-space:nowrap;letter-spacing:0.1px;">Opus 4.5</div><div class="a" style="left:869.3px;top:50.6px;width:200px;text-align:center;font-size:6px;line-height:7.2px;color:#e6e6e6;white-space:nowrap;letter-spacing:0.1px;">Gemini 3 Pro</div><div class="a" style="left:869.3px;top:58.55px;width:200px;text-align:center;font-size:6px;line-height:7.2px;color:#e6e6e6;white-space:nowrap;letter-spacing:0.1px;">Sonnet 4.5</div><div class="a" style="left:966.9px;top:19.18px;width:200px;text-align:center;font-size:9.2px;line-height:11.04px;color:#f2f2f2;white-space:nowrap;letter-spacing:0.25px;">Consistency</div><div class="a" style="left:1048.1px;top:50.5px;width:37px;height:17px;background:#1f4a86;"></div><div class="a" style="left:966.2px;top:34.4px;width:200px;text-align:center;font-size:6px;line-height:7.2px;color:#e6e6e6;white-space:nowrap;letter-spacing:0.1px;">Opus 4.5</div><div class="a" style="left:966.2px;top:42.35px;width:200px;text-align:center;font-size:6px;line-height:7.2px;color:#e6e6e6;white-space:nowrap;letter-spacing:0.1px;">Sonnet 4.5</div><div class="a" style="left:966.2px;top:50.3px;width:200px;text-align:center;font-size:6px;line-height:7.2px;color:#e6e6e6;white-space:nowrap;letter-spacing:0.1px;">Composer-1</div><div class="a" style="left:966.2px;top:58.25px;width:200px;text-align:center;font-size:6px;line-height:7.2px;color:#e6e6e6;white-space:nowrap;letter-spacing:0.1px;">Haiku 4.5</div><div class="a" style="left:1225.05px;top:0px;width:1.2px;height:67.1px;background:#4a4b4a;"></div><div class="a" style="left:1232.35px;top:0px;width:64.8px;height:67.1px;background:#1b1c20;"></div><div class="a" style="left:1241.65px;top:9.5px;width:10px;height:1.2px;background:#77787e;"></div><div class="a" style="left:1236.25px;top:15.5px;width:9.6px;height:9.6px;background:#27282e;border-radius:2px;"></div><div class="a" style="left:1249.05px;top:15.5px;width:9.6px;height:9.6px;background:#3f3c7c;border-radius:2px;"></div><div class="a" style="left:1261.85px;top:15.5px;width:9.6px;height:9.6px;background:#27282e;border-radius:2px;"></div><div class="a" style="left:1274.65px;top:15.5px;width:9.6px;height:9.6px;background:#27282e;border-radius:2px;"></div><div class="a" style="left:1241.65px;top:33.1px;width:11px;height:1.2px;background:#77787e;"></div><div class="a" style="left:1236.25px;top:39.2px;width:9.6px;height:9.6px;background:#27282e;border-radius:2px;"></div><div class="a" style="left:1249.05px;top:39.2px;width:9.6px;height:9.6px;background:#3f3c7c;border-radius:2px;"></div><div class="a" style="left:1261.85px;top:39.2px;width:9.6px;height:9.6px;background:#27282e;border-radius:2px;"></div><div class="a" style="left:1241.65px;top:56.7px;width:8px;height:1.2px;background:#77787e;"></div><div class="a" style="left:1241.65px;top:62.9px;width:52px;height:1px;background:#3f3c7c;"></div><div class="a" style="left:1278.85px;top:19.58px;width:200px;text-align:center;font-size:9.2px;line-height:11.04px;color:#f2f2f2;white-space:nowrap;letter-spacing:0.25px;">&quot;Output Ceiling&quot;</div><div class="a" style="left:1277.85px;top:34.7px;width:200px;text-align:center;font-size:6px;line-height:7.2px;color:#e6e6e6;white-space:nowrap;letter-spacing:0.1px;">GPT-5.1-Pro</div><div class="a" style="left:1277.85px;top:42.65px;width:200px;text-align:center;font-size:6px;line-height:7.2px;color:#e6e6e6;white-space:nowrap;letter-spacing:0.1px;">Opus 4.5</div><div class="a" style="left:1277.85px;top:50.6px;width:200px;text-align:center;font-size:6px;line-height:7.2px;color:#e6e6e6;white-space:nowrap;letter-spacing:0.1px;">Gemini 3 Pro</div><div class="a" style="left:1277.85px;top:58.55px;width:200px;text-align:center;font-size:6px;line-height:7.2px;color:#e6e6e6;white-space:nowrap;letter-spacing:0.1px;">Sonnet 4.5</div><div class="a" style="left:1375.45px;top:19.18px;width:200px;text-align:center;font-size:9.2px;line-height:11.04px;color:#f2f2f2;white-space:nowrap;letter-spacing:0.25px;">Consistency</div><div class="a" style="left:1374.75px;top:34.4px;width:200px;text-align:center;font-size:6px;line-height:7.2px;color:#e6e6e6;white-space:nowrap;letter-spacing:0.1px;">Opus 4.5</div><div class="a" style="left:1374.75px;top:42.35px;width:200px;text-align:center;font-size:6px;line-height:7.2px;color:#e6e6e6;white-space:nowrap;letter-spacing:0.1px;">Sonnet 4.5</div><div class="a" style="left:1374.75px;top:50.3px;width:200px;text-align:center;font-size:6px;line-height:7.2px;color:#e6e6e6;white-space:nowrap;letter-spacing:0.1px;">Composer-1</div><div class="a" style="left:1374.75px;top:58.25px;width:200px;text-align:center;font-size:6px;line-height:7.2px;color:#e6e6e6;white-space:nowrap;letter-spacing:0.1px;">Haiku 4.5</div><div class="a" style="left:1633.6px;top:0px;width:1.2px;height:67.1px;background:#4a4b4a;"></div><div class="a" style="left:1640.9px;top:0px;width:64.8px;height:67.1px;background:#1b1c20;"></div><div class="a" style="left:1648.2px;top:6px;width:12px;height:1.2px;background:#77787e;"></div><div class="a" style="left:1644.8px;top:9.7px;width:9.6px;height:9.6px;background:#3f3c7c;border-radius:2px;"></div><div class="a" style="left:1657.6px;top:9.7px;width:9.6px;height:9.6px;background:#27282e;border-radius:2px;"></div><div class="a" style="left:1670.4px;top:9.7px;width:9.6px;height:9.6px;background:#27282e;border-radius:2px;"></div><div class="a" style="left:1648.2px;top:29.3px;width:11px;height:1.2px;background:#77787e;"></div><div class="a" style="left:1644.8px;top:33.3px;width:9.6px;height:9.6px;background:#27282e;border-radius:2px;"></div><div class="a" style="left:1657.6px;top:33.3px;width:9.6px;height:9.6px;background:#3f3c7c;border-radius:2px;"></div><div class="a" style="left:1670.4px;top:33.3px;width:9.6px;height:9.6px;background:#27282e;border-radius:2px;"></div><div class="a" style="left:1648.2px;top:52.9px;width:11px;height:1.2px;background:#77787e;"></div><div class="a" style="left:1644.8px;top:56.9px;width:9.6px;height:9.6px;background:#27282e;border-radius:2px;"></div><div class="a" style="left:1657.6px;top:56.9px;width:9.6px;height:9.6px;background:#3f3c7c;border-radius:2px;"></div><div class="a" style="left:1670.4px;top:56.9px;width:9.6px;height:9.6px;background:#27282e;border-radius:2px;"></div><div class="a" style="left:1687.4px;top:19.58px;width:200px;text-align:center;font-size:9.2px;line-height:11.04px;color:#f2f2f2;white-space:nowrap;letter-spacing:0.25px;">&quot;Output Ceiling&quot;</div><div class="a" style="left:1686.4px;top:34.7px;width:200px;text-align:center;font-size:6px;line-height:7.2px;color:#e6e6e6;white-space:nowrap;letter-spacing:0.1px;">GPT-5.1-Pro</div><div class="a" style="left:1686.4px;top:42.65px;width:200px;text-align:center;font-size:6px;line-height:7.2px;color:#e6e6e6;white-space:nowrap;letter-spacing:0.1px;">Opus 4.5</div><div class="a" style="left:1686.4px;top:50.6px;width:200px;text-align:center;font-size:6px;line-height:7.2px;color:#e6e6e6;white-space:nowrap;letter-spacing:0.1px;">Gemini 3 Pro</div><div class="a" style="left:1686.4px;top:58.55px;width:200px;text-align:center;font-size:6px;line-height:7.2px;color:#e6e6e6;white-space:nowrap;letter-spacing:0.1px;">Sonnet 4.5</div><div class="a" style="left:1784px;top:19.18px;width:200px;text-align:center;font-size:9.2px;line-height:11.04px;color:#f2f2f2;white-space:nowrap;letter-spacing:0.25px;">Consistency</div><div class="a" style="left:1783.3px;top:34.4px;width:200px;text-align:center;font-size:6px;line-height:7.2px;color:#e6e6e6;white-space:nowrap;letter-spacing:0.1px;">Opus 4.5</div><div class="a" style="left:1783.3px;top:42.35px;width:200px;text-align:center;font-size:6px;line-height:7.2px;color:#e6e6e6;white-space:nowrap;letter-spacing:0.1px;">Sonnet 4.5</div><div class="a" style="left:1783.3px;top:50.3px;width:200px;text-align:center;font-size:6px;line-height:7.2px;color:#e6e6e6;white-space:nowrap;letter-spacing:0.1px;">Composer-1</div><div class="a" style="left:1783.3px;top:58.25px;width:200px;text-align:center;font-size:6px;line-height:7.2px;color:#e6e6e6;white-space:nowrap;letter-spacing:0.1px;">Haiku 4.5</div><div class="a" style="left:9px;top:79px;width:40px;height:25px;background:#767676;border-radius:4.2px;"></div><div class="a" style="left:51.83px;top:77.8px;width:40px;height:27.4px;background:#767676;border-radius:4.2px;"></div><div class="a" style="left:94.67px;top:77px;width:40px;height:29px;background:#767676;border-radius:4.2px;"></div><div class="a" style="left:137.51px;top:76.25px;width:40px;height:30.5px;background:#767676;border-radius:4.2px;"></div><div class="a" style="left:180.34px;top:75.5px;width:40px;height:32px;background:#767676;border-radius:4.2px;"></div><div class="a" style="left:223.18px;top:74.5px;width:40px;height:34px;background:#767676;border-radius:4.2px;"></div><div class="a" style="left:266.01px;top:73.75px;width:40px;height:35.5px;background:#767676;border-radius:4.2px;"></div><div class="a" style="left:308.84px;top:72.8px;width:40px;height:37.4px;background:#767676;border-radius:4.2px;"></div><div class="a" style="left:351.68px;top:72px;width:40px;height:39px;background:#767676;border-radius:4.2px;"></div><div class="a" style="left:394.52px;top:71.35px;width:40px;height:40.3px;background:#767676;border-radius:4.2px;"></div><div class="a" style="left:437.35px;top:70.85px;width:40px;height:41.3px;background:#767676;border-radius:4.2px;"></div><div class="a" style="left:480.19px;top:70.25px;width:40px;height:42.5px;background:#767676;border-radius:4.2px;"></div><div class="a" style="left:523.02px;top:69.85px;width:40px;height:43.3px;background:#767676;border-radius:4.2px;"></div><div class="a" style="left:565.86px;top:69.5px;width:40px;height:44px;background:#767676;border-radius:4.2px;"></div><div class="a" style="left:608.69px;top:69px;width:40px;height:45px;background:#767676;border-radius:4.2px;"></div><div class="a" style="left:651.53px;top:68.6px;width:40px;height:45.8px;background:#767676;border-radius:4.2px;"></div><div class="a" style="left:694.36px;top:68.5px;width:40px;height:46px;background:#767676;border-radius:4.2px;"></div><div class="a" style="left:737.2px;top:68.5px;width:40px;height:46px;background:#767676;border-radius:4.2px;"></div><div class="a" style="left:780.03px;top:68.5px;width:40px;height:46px;background:#767676;border-radius:4.2px;"></div><div class="a" style="left:822.87px;top:69.25px;width:40px;height:44.5px;background:#767676;border-radius:4.2px;"></div><div class="a" style="left:865.7px;top:69.6px;width:40px;height:43.8px;background:#767676;border-radius:4.2px;"></div><div class="a" style="left:908.54px;top:69.9px;width:40px;height:43.2px;background:#767676;border-radius:4.2px;"></div><div class="a" style="left:951.37px;top:70.7px;width:40px;height:41.6px;background:#767676;border-radius:4.2px;"></div><div class="a" style="left:994.21px;top:71.35px;width:40px;height:40.3px;background:#767676;border-radius:4.2px;"></div><div class="a" style="left:1037.04px;top:72.15px;width:40px;height:38.7px;background:#767676;border-radius:4.2px;"></div><div class="a" style="left:1079.88px;top:72.7px;width:40px;height:37.6px;background:#767676;border-radius:4.2px;"></div><div class="a" style="left:1122.71px;top:73.25px;width:40px;height:36.5px;background:#767676;border-radius:4.2px;"></div><div class="a" style="left:1165.55px;top:74px;width:40px;height:35px;background:#767676;border-radius:4.2px;"></div><div class="a" style="left:1208.38px;top:74.9px;width:40px;height:33.2px;background:#767676;border-radius:4.2px;"></div><div class="a" style="left:1251.21px;top:75.75px;width:40px;height:31.5px;background:#767676;border-radius:4.2px;"></div><div class="a" style="left:1294.05px;top:76.5px;width:40px;height:30px;background:#767676;border-radius:4.2px;"></div><div class="a" style="left:1336.88px;top:77.85px;width:40px;height:27.3px;background:#767676;border-radius:4.2px;"></div><div class="a" style="left:1379.72px;top:78.85px;width:40px;height:25.3px;background:#767676;border-radius:4.2px;"></div><div class="a" style="left:1422.56px;top:79.8px;width:40px;height:23.4px;background:#767676;border-radius:4.2px;"></div><div class="a" style="left:1465.39px;top:80.5px;width:40px;height:22px;background:#767676;border-radius:4.2px;"></div><div class="a" style="left:1508.23px;top:81.75px;width:40px;height:19.5px;background:#767676;border-radius:4.2px;"></div><div class="a" style="left:1551.06px;top:82.8px;width:40px;height:17.4px;background:#767676;border-radius:4.2px;"></div><div class="a" style="left:1593.9px;top:83.6px;width:40px;height:15.8px;background:#767676;border-radius:4.2px;"></div><div class="a" style="left:1636.73px;top:84.5px;width:40px;height:14px;background:#767676;border-radius:4.2px;"></div><div class="a" style="left:1679.57px;top:85.2px;width:40px;height:12.6px;background:#767676;border-radius:4.2px;"></div><div class="a" style="left:1722.4px;top:85.85px;width:40px;height:11.3px;background:#767676;border-radius:4.2px;"></div><div class="a" style="left:1765.24px;top:86.35px;width:40px;height:10.3px;background:#767676;border-radius:4.2px;"></div><div class="a" style="left:1808.07px;top:86.9px;width:40px;height:9.2px;background:#767676;border-radius:4.2px;"></div><div class="a" style="left:1850.9px;top:87.7px;width:40px;height:7.6px;background:#767676;border-radius:3.8px;"></div></div>
<div style="left:462.6px;top:1204.5px;width:2px;height:166.5px;background:#111;border-radius:0 0 1px 1px;"></div>
<div style="left:461.2px;top:1204.5px;width:5.2px;height:6.6px;background:#111;border-radius:1px 1px 2px 1px;"></div>
</body></html>
